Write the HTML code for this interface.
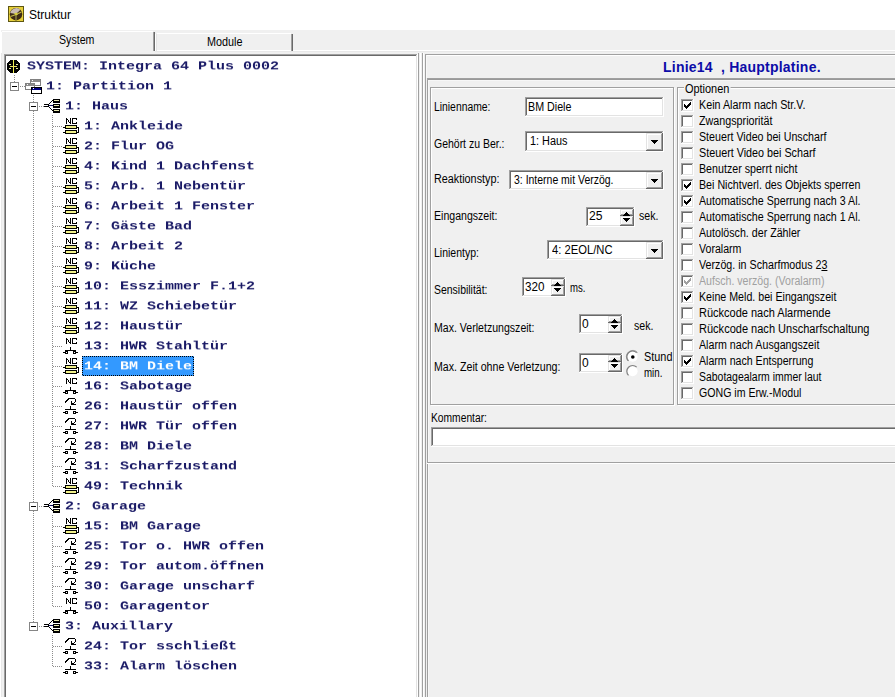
<!DOCTYPE html>
<html><head><meta charset="utf-8">
<style>
*{margin:0;padding:0}
html,body{width:895px;height:697px;overflow:hidden;background:#f0f0f0;position:relative;font-family:"Liberation Sans",sans-serif;font-size:12px;color:#000}
.full{position:absolute;left:0;top:0}
.abs{position:absolute}
.tr{position:absolute;font-family:"Liberation Mono",monospace;font-weight:bold;font-size:15px;transform:scaleY(0.8);transform-origin:0 0;will-change:transform;line-height:20px;height:20px;color:#1a1a66;white-space:pre}
.lb{position:absolute;white-space:pre;line-height:14px;font-size:12px;transform-origin:0 0}
u{text-decoration:underline}
</style></head><body>
<svg class="full" width="895" height="697" shape-rendering="crispEdges"><rect x="0" y="0" width="895" height="30" fill="#fff"/><rect x="0" y="30" width="1" height="667" fill="#fff"/><rect x="1" y="51" width="1" height="646" fill="#e8e8e8"/><rect x="1" y="50" width="894" height="1" fill="#fff"/><rect x="2" y="51" width="893" height="1" fill="#e8e8e8"/><rect x="1" y="31" width="154" height="22" fill="#f0f0f0"/><rect x="2" y="31" width="151" height="1" fill="#fff"/><rect x="1" y="32" width="1" height="21" fill="#fff"/><rect x="153" y="32" width="1" height="19" fill="#a0a0a0"/><rect x="154" y="32" width="1" height="19" fill="#696969"/><rect x="2" y="50" width="151" height="4" fill="#f0f0f0"/><rect x="157" y="33" width="134" height="1" fill="#fff"/><rect x="155" y="34" width="1" height="17" fill="#fff"/><rect x="156" y="34" width="1" height="17" fill="#e3e3e3"/><rect x="291" y="34" width="1" height="17" fill="#a0a0a0"/><rect x="292" y="34" width="1" height="17" fill="#696969"/><rect x="4" y="54" width="414" height="643" fill="#fff"/><rect x="4" y="54" width="413" height="1" fill="#a0a0a0"/><rect x="4" y="54" width="1" height="643" fill="#a0a0a0"/><rect x="5" y="55" width="411" height="1" fill="#696969"/><rect x="5" y="55" width="1" height="642" fill="#696969"/><rect x="416" y="55" width="1" height="642" fill="#e3e3e3"/><rect x="417" y="54" width="1" height="643" fill="#fff"/><rect x="418" y="53" width="1" height="644" fill="#a0a0a0"/><rect x="420" y="53" width="1" height="644" fill="#fff"/><rect x="422" y="53" width="1" height="644" fill="#a0a0a0"/><rect x="423" y="53" width="1" height="644" fill="#fff"/><rect x="425" y="54" width="1" height="643" fill="#a0a0a0"/><rect x="425" y="54" width="470" height="1" fill="#a0a0a0"/><rect x="426" y="55" width="469" height="1" fill="#fff"/><rect x="426" y="55" width="1" height="23" fill="#f8f8f8"/><rect x="427" y="78" width="468" height="1" fill="#a0a0a0"/><rect x="427" y="79" width="468" height="1" fill="#999999"/><rect x="427" y="78" width="1" height="619" fill="#a0a0a0"/><rect x="428" y="80" width="467" height="1" fill="#f7f7f7"/><rect x="428" y="80" width="1" height="617" fill="#f8f8f8"/><rect x="427" y="462" width="468" height="1" fill="#a0a0a0"/><rect x="427" y="463" width="468" height="1" fill="#fff"/><rect x="431" y="88" width="244" height="1" fill="#fff"/><rect x="431" y="88" width="1" height="318" fill="#fff"/><rect x="431" y="405" width="244" height="1" fill="#fff"/><rect x="674" y="88" width="1" height="318" fill="#fff"/><rect x="430" y="87" width="244" height="1" fill="#a0a0a0"/><rect x="430" y="87" width="1" height="318" fill="#a0a0a0"/><rect x="430" y="404" width="244" height="1" fill="#a0a0a0"/><rect x="673" y="87" width="1" height="318" fill="#a0a0a0"/><rect x="678" y="88" width="239" height="1" fill="#fff"/><rect x="678" y="88" width="1" height="318" fill="#fff"/><rect x="678" y="405" width="239" height="1" fill="#fff"/><rect x="916" y="88" width="1" height="318" fill="#fff"/><rect x="677" y="87" width="239" height="1" fill="#a0a0a0"/><rect x="677" y="87" width="1" height="318" fill="#a0a0a0"/><rect x="677" y="404" width="239" height="1" fill="#a0a0a0"/><rect x="915" y="87" width="1" height="318" fill="#a0a0a0"/><rect x="525" y="97" width="139" height="20" fill="#fff"/><rect x="525" y="97" width="138" height="1" fill="#a0a0a0"/><rect x="525" y="97" width="1" height="19" fill="#a0a0a0"/><rect x="526" y="98" width="136" height="1" fill="#696969"/><rect x="526" y="98" width="1" height="17" fill="#696969"/><rect x="525" y="116" width="139" height="1" fill="#fff"/><rect x="663" y="97" width="1" height="20" fill="#fff"/><rect x="526" y="115" width="137" height="1" fill="#e3e3e3"/><rect x="662" y="98" width="1" height="18" fill="#e3e3e3"/><rect x="525" y="131" width="139" height="21" fill="#fff"/><rect x="525" y="131" width="138" height="1" fill="#a0a0a0"/><rect x="525" y="131" width="1" height="20" fill="#a0a0a0"/><rect x="526" y="132" width="136" height="1" fill="#696969"/><rect x="526" y="132" width="1" height="18" fill="#696969"/><rect x="525" y="151" width="139" height="1" fill="#fff"/><rect x="663" y="131" width="1" height="21" fill="#fff"/><rect x="526" y="150" width="137" height="1" fill="#e3e3e3"/><rect x="662" y="132" width="1" height="19" fill="#e3e3e3"/><rect x="646" y="133" width="17" height="18" fill="#f0f0f0"/><rect x="646" y="133" width="16" height="1" fill="#e3e3e3"/><rect x="646" y="133" width="1" height="17" fill="#e3e3e3"/><rect x="647" y="134" width="14" height="1" fill="#fff"/><rect x="647" y="134" width="1" height="15" fill="#fff"/><rect x="646" y="150" width="17" height="1" fill="#696969"/><rect x="662" y="133" width="1" height="18" fill="#696969"/><rect x="647" y="149" width="15" height="1" fill="#a0a0a0"/><rect x="661" y="134" width="1" height="16" fill="#a0a0a0"/><rect x="651" y="140" width="7" height="1" fill="#000"/><rect x="652" y="141" width="5" height="1" fill="#000"/><rect x="653" y="142" width="3" height="1" fill="#000"/><rect x="654" y="143" width="1" height="1" fill="#000"/><rect x="509" y="170" width="155" height="20" fill="#fff"/><rect x="509" y="170" width="154" height="1" fill="#a0a0a0"/><rect x="509" y="170" width="1" height="19" fill="#a0a0a0"/><rect x="510" y="171" width="152" height="1" fill="#696969"/><rect x="510" y="171" width="1" height="17" fill="#696969"/><rect x="509" y="189" width="155" height="1" fill="#fff"/><rect x="663" y="170" width="1" height="20" fill="#fff"/><rect x="510" y="188" width="153" height="1" fill="#e3e3e3"/><rect x="662" y="171" width="1" height="18" fill="#e3e3e3"/><rect x="646" y="172" width="17" height="17" fill="#f0f0f0"/><rect x="646" y="172" width="16" height="1" fill="#e3e3e3"/><rect x="646" y="172" width="1" height="16" fill="#e3e3e3"/><rect x="647" y="173" width="14" height="1" fill="#fff"/><rect x="647" y="173" width="1" height="14" fill="#fff"/><rect x="646" y="188" width="17" height="1" fill="#696969"/><rect x="662" y="172" width="1" height="17" fill="#696969"/><rect x="647" y="187" width="15" height="1" fill="#a0a0a0"/><rect x="661" y="173" width="1" height="15" fill="#a0a0a0"/><rect x="651" y="179" width="7" height="1" fill="#000"/><rect x="652" y="180" width="5" height="1" fill="#000"/><rect x="653" y="181" width="3" height="1" fill="#000"/><rect x="654" y="182" width="1" height="1" fill="#000"/><rect x="586" y="207" width="49" height="20" fill="#fff"/><rect x="586" y="207" width="48" height="1" fill="#a0a0a0"/><rect x="586" y="207" width="1" height="19" fill="#a0a0a0"/><rect x="587" y="208" width="46" height="1" fill="#696969"/><rect x="587" y="208" width="1" height="17" fill="#696969"/><rect x="586" y="226" width="49" height="1" fill="#fff"/><rect x="634" y="207" width="1" height="20" fill="#fff"/><rect x="587" y="225" width="47" height="1" fill="#e3e3e3"/><rect x="633" y="208" width="1" height="18" fill="#e3e3e3"/><rect x="620" y="209" width="14" height="7" fill="#f0f0f0"/><rect x="620" y="209" width="13" height="1" fill="#e3e3e3"/><rect x="620" y="209" width="1" height="6" fill="#e3e3e3"/><rect x="621" y="210" width="11" height="1" fill="#fff"/><rect x="621" y="210" width="1" height="4" fill="#fff"/><rect x="620" y="215" width="14" height="1" fill="#696969"/><rect x="633" y="209" width="1" height="7" fill="#696969"/><rect x="621" y="214" width="12" height="1" fill="#a0a0a0"/><rect x="632" y="210" width="1" height="5" fill="#a0a0a0"/><rect x="620" y="216" width="14" height="10" fill="#f0f0f0"/><rect x="620" y="216" width="13" height="1" fill="#e3e3e3"/><rect x="620" y="216" width="1" height="9" fill="#e3e3e3"/><rect x="621" y="217" width="11" height="1" fill="#fff"/><rect x="621" y="217" width="1" height="7" fill="#fff"/><rect x="620" y="225" width="14" height="1" fill="#696969"/><rect x="633" y="216" width="1" height="10" fill="#696969"/><rect x="621" y="224" width="12" height="1" fill="#a0a0a0"/><rect x="632" y="217" width="1" height="8" fill="#a0a0a0"/><rect x="626" y="212" width="1" height="1" fill="#000"/><rect x="625" y="213" width="3" height="1" fill="#000"/><rect x="624" y="214" width="5" height="1" fill="#000"/><rect x="623" y="215" width="7" height="1" fill="#000"/><rect x="623" y="218" width="7" height="1" fill="#000"/><rect x="624" y="219" width="5" height="1" fill="#000"/><rect x="625" y="220" width="3" height="1" fill="#000"/><rect x="626" y="221" width="1" height="1" fill="#000"/><rect x="547" y="240" width="117" height="20" fill="#fff"/><rect x="547" y="240" width="116" height="1" fill="#a0a0a0"/><rect x="547" y="240" width="1" height="19" fill="#a0a0a0"/><rect x="548" y="241" width="114" height="1" fill="#696969"/><rect x="548" y="241" width="1" height="17" fill="#696969"/><rect x="547" y="259" width="117" height="1" fill="#fff"/><rect x="663" y="240" width="1" height="20" fill="#fff"/><rect x="548" y="258" width="115" height="1" fill="#e3e3e3"/><rect x="662" y="241" width="1" height="18" fill="#e3e3e3"/><rect x="646" y="242" width="17" height="17" fill="#f0f0f0"/><rect x="646" y="242" width="16" height="1" fill="#e3e3e3"/><rect x="646" y="242" width="1" height="16" fill="#e3e3e3"/><rect x="647" y="243" width="14" height="1" fill="#fff"/><rect x="647" y="243" width="1" height="14" fill="#fff"/><rect x="646" y="258" width="17" height="1" fill="#696969"/><rect x="662" y="242" width="1" height="17" fill="#696969"/><rect x="647" y="257" width="15" height="1" fill="#a0a0a0"/><rect x="661" y="243" width="1" height="15" fill="#a0a0a0"/><rect x="651" y="249" width="7" height="1" fill="#000"/><rect x="652" y="250" width="5" height="1" fill="#000"/><rect x="653" y="251" width="3" height="1" fill="#000"/><rect x="654" y="252" width="1" height="1" fill="#000"/><rect x="522" y="277" width="44" height="20" fill="#fff"/><rect x="522" y="277" width="43" height="1" fill="#a0a0a0"/><rect x="522" y="277" width="1" height="19" fill="#a0a0a0"/><rect x="523" y="278" width="41" height="1" fill="#696969"/><rect x="523" y="278" width="1" height="17" fill="#696969"/><rect x="522" y="296" width="44" height="1" fill="#fff"/><rect x="565" y="277" width="1" height="20" fill="#fff"/><rect x="523" y="295" width="42" height="1" fill="#e3e3e3"/><rect x="564" y="278" width="1" height="18" fill="#e3e3e3"/><rect x="551" y="279" width="14" height="7" fill="#f0f0f0"/><rect x="551" y="279" width="13" height="1" fill="#e3e3e3"/><rect x="551" y="279" width="1" height="6" fill="#e3e3e3"/><rect x="552" y="280" width="11" height="1" fill="#fff"/><rect x="552" y="280" width="1" height="4" fill="#fff"/><rect x="551" y="285" width="14" height="1" fill="#696969"/><rect x="564" y="279" width="1" height="7" fill="#696969"/><rect x="552" y="284" width="12" height="1" fill="#a0a0a0"/><rect x="563" y="280" width="1" height="5" fill="#a0a0a0"/><rect x="551" y="286" width="14" height="10" fill="#f0f0f0"/><rect x="551" y="286" width="13" height="1" fill="#e3e3e3"/><rect x="551" y="286" width="1" height="9" fill="#e3e3e3"/><rect x="552" y="287" width="11" height="1" fill="#fff"/><rect x="552" y="287" width="1" height="7" fill="#fff"/><rect x="551" y="295" width="14" height="1" fill="#696969"/><rect x="564" y="286" width="1" height="10" fill="#696969"/><rect x="552" y="294" width="12" height="1" fill="#a0a0a0"/><rect x="563" y="287" width="1" height="8" fill="#a0a0a0"/><rect x="557" y="282" width="1" height="1" fill="#000"/><rect x="556" y="283" width="3" height="1" fill="#000"/><rect x="555" y="284" width="5" height="1" fill="#000"/><rect x="554" y="285" width="7" height="1" fill="#000"/><rect x="554" y="288" width="7" height="1" fill="#000"/><rect x="555" y="289" width="5" height="1" fill="#000"/><rect x="556" y="290" width="3" height="1" fill="#000"/><rect x="557" y="291" width="1" height="1" fill="#000"/><rect x="579" y="314" width="44" height="20" fill="#fff"/><rect x="579" y="314" width="43" height="1" fill="#a0a0a0"/><rect x="579" y="314" width="1" height="19" fill="#a0a0a0"/><rect x="580" y="315" width="41" height="1" fill="#696969"/><rect x="580" y="315" width="1" height="17" fill="#696969"/><rect x="579" y="333" width="44" height="1" fill="#fff"/><rect x="622" y="314" width="1" height="20" fill="#fff"/><rect x="580" y="332" width="42" height="1" fill="#e3e3e3"/><rect x="621" y="315" width="1" height="18" fill="#e3e3e3"/><rect x="608" y="316" width="14" height="7" fill="#f0f0f0"/><rect x="608" y="316" width="13" height="1" fill="#e3e3e3"/><rect x="608" y="316" width="1" height="6" fill="#e3e3e3"/><rect x="609" y="317" width="11" height="1" fill="#fff"/><rect x="609" y="317" width="1" height="4" fill="#fff"/><rect x="608" y="322" width="14" height="1" fill="#696969"/><rect x="621" y="316" width="1" height="7" fill="#696969"/><rect x="609" y="321" width="12" height="1" fill="#a0a0a0"/><rect x="620" y="317" width="1" height="5" fill="#a0a0a0"/><rect x="608" y="323" width="14" height="10" fill="#f0f0f0"/><rect x="608" y="323" width="13" height="1" fill="#e3e3e3"/><rect x="608" y="323" width="1" height="9" fill="#e3e3e3"/><rect x="609" y="324" width="11" height="1" fill="#fff"/><rect x="609" y="324" width="1" height="7" fill="#fff"/><rect x="608" y="332" width="14" height="1" fill="#696969"/><rect x="621" y="323" width="1" height="10" fill="#696969"/><rect x="609" y="331" width="12" height="1" fill="#a0a0a0"/><rect x="620" y="324" width="1" height="8" fill="#a0a0a0"/><rect x="614" y="319" width="1" height="1" fill="#000"/><rect x="613" y="320" width="3" height="1" fill="#000"/><rect x="612" y="321" width="5" height="1" fill="#000"/><rect x="611" y="322" width="7" height="1" fill="#000"/><rect x="611" y="325" width="7" height="1" fill="#000"/><rect x="612" y="326" width="5" height="1" fill="#000"/><rect x="613" y="327" width="3" height="1" fill="#000"/><rect x="614" y="328" width="1" height="1" fill="#000"/><rect x="579" y="353" width="44" height="20" fill="#fff"/><rect x="579" y="353" width="43" height="1" fill="#a0a0a0"/><rect x="579" y="353" width="1" height="19" fill="#a0a0a0"/><rect x="580" y="354" width="41" height="1" fill="#696969"/><rect x="580" y="354" width="1" height="17" fill="#696969"/><rect x="579" y="372" width="44" height="1" fill="#fff"/><rect x="622" y="353" width="1" height="20" fill="#fff"/><rect x="580" y="371" width="42" height="1" fill="#e3e3e3"/><rect x="621" y="354" width="1" height="18" fill="#e3e3e3"/><rect x="608" y="355" width="14" height="7" fill="#f0f0f0"/><rect x="608" y="355" width="13" height="1" fill="#e3e3e3"/><rect x="608" y="355" width="1" height="6" fill="#e3e3e3"/><rect x="609" y="356" width="11" height="1" fill="#fff"/><rect x="609" y="356" width="1" height="4" fill="#fff"/><rect x="608" y="361" width="14" height="1" fill="#696969"/><rect x="621" y="355" width="1" height="7" fill="#696969"/><rect x="609" y="360" width="12" height="1" fill="#a0a0a0"/><rect x="620" y="356" width="1" height="5" fill="#a0a0a0"/><rect x="608" y="362" width="14" height="10" fill="#f0f0f0"/><rect x="608" y="362" width="13" height="1" fill="#e3e3e3"/><rect x="608" y="362" width="1" height="9" fill="#e3e3e3"/><rect x="609" y="363" width="11" height="1" fill="#fff"/><rect x="609" y="363" width="1" height="7" fill="#fff"/><rect x="608" y="371" width="14" height="1" fill="#696969"/><rect x="621" y="362" width="1" height="10" fill="#696969"/><rect x="609" y="370" width="12" height="1" fill="#a0a0a0"/><rect x="620" y="363" width="1" height="8" fill="#a0a0a0"/><rect x="614" y="358" width="1" height="1" fill="#000"/><rect x="613" y="359" width="3" height="1" fill="#000"/><rect x="612" y="360" width="5" height="1" fill="#000"/><rect x="611" y="361" width="7" height="1" fill="#000"/><rect x="611" y="364" width="7" height="1" fill="#000"/><rect x="612" y="365" width="5" height="1" fill="#000"/><rect x="613" y="366" width="3" height="1" fill="#000"/><rect x="614" y="367" width="1" height="1" fill="#000"/><rect x="431" y="427" width="480" height="20" fill="#fff"/><rect x="431" y="427" width="479" height="1" fill="#a0a0a0"/><rect x="431" y="427" width="1" height="19" fill="#a0a0a0"/><rect x="432" y="428" width="477" height="1" fill="#696969"/><rect x="432" y="428" width="1" height="17" fill="#696969"/><rect x="431" y="446" width="480" height="1" fill="#fff"/><rect x="910" y="427" width="1" height="20" fill="#fff"/><rect x="432" y="445" width="478" height="1" fill="#e3e3e3"/><rect x="909" y="428" width="1" height="18" fill="#e3e3e3"/><g shape-rendering="geometricPrecision"><path d="M637.5 352.5 A5.5 5.5 0 0 0 628 361" stroke="#a0a0a0" stroke-width="1" fill="none"/><path d="M638 352 A5.5 5.5 0 1 0 638 352.01" fill="none"/><circle cx="632.6" cy="356.8" r="5" fill="#fff"/><path d="M636.7 352.7 A5.6 5.6 0 0 0 628.5 360.9" stroke="#808080" stroke-width="1.2" fill="none"/><circle cx="632.8" cy="357" r="1.8" fill="#000"/><circle cx="632.6" cy="371.3" r="5" fill="#fff"/><path d="M636.7 367.2 A5.6 5.6 0 0 0 628.5 375.4" stroke="#808080" stroke-width="1.2" fill="none"/></g><path d="M10 60h7v1h1v1h1v1h1v7h-1v1h-1v1h-1v1h-7v-1h-1v-1h-1v-1h-1v-7h1v-1h1v-1h1z" fill="#000"/><rect x="13" y="60" width="1" height="13" fill="#f0f050"/><rect x="10" y="66" width="7" height="1" fill="#e8e060"/><rect x="9" y="64" width="2" height="1" fill="#e8e8a0"/><rect x="16" y="64" width="2" height="1" fill="#e8e8a0"/><rect x="9" y="68" width="2" height="1" fill="#e8e8a0"/><rect x="16" y="68" width="2" height="1" fill="#e8e8a0"/><rect x="10" y="82" width="9" height="9" fill="#858585"/><rect x="11" y="83" width="7" height="7" fill="#fff"/><rect x="12" y="86" width="5" height="1" fill="#000"/><rect x="20" y="86" width="1" height="1" fill="#8c8c8c"/><rect x="22" y="86" width="1" height="1" fill="#8c8c8c"/><rect x="24" y="86" width="1" height="1" fill="#8c8c8c"/><rect x="30" y="79" width="11" height="7" fill="#808080"/><rect x="31" y="80" width="9" height="2" fill="#8c8c8c"/><rect x="31" y="82" width="9" height="3" fill="#fff"/><rect x="32" y="80" width="1" height="1" fill="#fff"/><rect x="25" y="83" width="10" height="7" fill="#808080"/><rect x="26" y="84" width="8" height="2" fill="#8c8c8c"/><rect x="26" y="86" width="8" height="3" fill="#fff"/><rect x="27" y="84" width="1" height="1" fill="#fff"/><rect x="31" y="87" width="11" height="7" fill="#000"/><rect x="32" y="88" width="9" height="2" fill="#000080"/><rect x="32" y="90" width="9" height="3" fill="#fff"/><rect x="33" y="88" width="1" height="1" fill="#fff"/><rect x="29" y="102" width="9" height="9" fill="#858585"/><rect x="30" y="103" width="7" height="7" fill="#fff"/><rect x="31" y="106" width="5" height="1" fill="#000"/><rect x="39" y="106" width="1" height="1" fill="#8c8c8c"/><rect x="41" y="106" width="1" height="1" fill="#8c8c8c"/><rect x="43" y="106" width="1" height="1" fill="#8c8c8c"/><rect x="44" y="104" width="5" height="1" fill="#000"/><rect x="44" y="106" width="5" height="1" fill="#000"/><rect x="48" y="104" width="1" height="3" fill="#000"/><rect x="49" y="103" width="1" height="1" fill="#000"/><rect x="49" y="107" width="1" height="1" fill="#000"/><rect x="50" y="102" width="1" height="1" fill="#000"/><rect x="50" y="108" width="1" height="1" fill="#000"/><rect x="51" y="101" width="1" height="1" fill="#000"/><rect x="51" y="109" width="1" height="1" fill="#000"/><rect x="52" y="100" width="1" height="1" fill="#000"/><rect x="52" y="110" width="1" height="1" fill="#000"/><rect x="49" y="105" width="4" height="1" fill="#101060"/><rect x="53" y="99" width="7" height="4" fill="#000"/><rect x="54" y="100" width="5" height="1" fill="#e8e8b0"/><rect x="53" y="104" width="7" height="4" fill="#000"/><rect x="54" y="105" width="5" height="1" fill="#e8e8b0"/><rect x="53" y="109" width="7" height="4" fill="#000"/><rect x="54" y="110" width="5" height="1" fill="#e8e8b0"/><rect x="53" y="126" width="1" height="1" fill="#8c8c8c"/><rect x="55" y="126" width="1" height="1" fill="#8c8c8c"/><rect x="57" y="126" width="1" height="1" fill="#8c8c8c"/><rect x="59" y="126" width="1" height="1" fill="#8c8c8c"/><rect x="61" y="126" width="1" height="1" fill="#8c8c8c"/><rect x="66" y="118" width="1" height="6" fill="#000"/><rect x="70" y="118" width="1" height="6" fill="#000"/><rect x="67" y="119" width="1" height="1" fill="#000"/><rect x="68" y="120" width="1" height="2" fill="#000"/><rect x="69" y="122" width="1" height="1" fill="#000"/><rect x="72" y="118" width="1" height="6" fill="#000"/><rect x="72" y="118" width="5" height="1" fill="#000"/><rect x="72" y="123" width="5" height="1" fill="#000"/><rect x="76" y="119" width="1" height="1" fill="#000"/><rect x="76" y="122" width="1" height="1" fill="#000"/><rect x="65" y="125" width="12" height="4" fill="#000"/><rect x="66" y="126" width="10" height="2" fill="#f0f088"/><rect x="63" y="127" width="2" height="1" fill="#000"/><rect x="65" y="130" width="12" height="4" fill="#000"/><rect x="66" y="131" width="10" height="2" fill="#f0f088"/><rect x="63" y="132" width="2" height="1" fill="#000"/><rect x="78" y="127" width="1" height="6" fill="#000"/><rect x="77" y="127" width="1" height="1" fill="#000"/><rect x="77" y="132" width="1" height="1" fill="#000"/><rect x="53" y="146" width="1" height="1" fill="#8c8c8c"/><rect x="55" y="146" width="1" height="1" fill="#8c8c8c"/><rect x="57" y="146" width="1" height="1" fill="#8c8c8c"/><rect x="59" y="146" width="1" height="1" fill="#8c8c8c"/><rect x="61" y="146" width="1" height="1" fill="#8c8c8c"/><rect x="66" y="138" width="1" height="6" fill="#000"/><rect x="70" y="138" width="1" height="6" fill="#000"/><rect x="67" y="139" width="1" height="1" fill="#000"/><rect x="68" y="140" width="1" height="2" fill="#000"/><rect x="69" y="142" width="1" height="1" fill="#000"/><rect x="72" y="138" width="1" height="6" fill="#000"/><rect x="72" y="138" width="5" height="1" fill="#000"/><rect x="72" y="143" width="5" height="1" fill="#000"/><rect x="76" y="139" width="1" height="1" fill="#000"/><rect x="76" y="142" width="1" height="1" fill="#000"/><rect x="65" y="145" width="12" height="4" fill="#000"/><rect x="66" y="146" width="10" height="2" fill="#f0f088"/><rect x="63" y="147" width="2" height="1" fill="#000"/><rect x="65" y="150" width="12" height="4" fill="#000"/><rect x="66" y="151" width="10" height="2" fill="#f0f088"/><rect x="63" y="152" width="2" height="1" fill="#000"/><rect x="78" y="147" width="1" height="6" fill="#000"/><rect x="77" y="147" width="1" height="1" fill="#000"/><rect x="77" y="152" width="1" height="1" fill="#000"/><rect x="53" y="166" width="1" height="1" fill="#8c8c8c"/><rect x="55" y="166" width="1" height="1" fill="#8c8c8c"/><rect x="57" y="166" width="1" height="1" fill="#8c8c8c"/><rect x="59" y="166" width="1" height="1" fill="#8c8c8c"/><rect x="61" y="166" width="1" height="1" fill="#8c8c8c"/><rect x="66" y="158" width="1" height="6" fill="#000"/><rect x="70" y="158" width="1" height="6" fill="#000"/><rect x="67" y="159" width="1" height="1" fill="#000"/><rect x="68" y="160" width="1" height="2" fill="#000"/><rect x="69" y="162" width="1" height="1" fill="#000"/><rect x="72" y="158" width="1" height="6" fill="#000"/><rect x="72" y="158" width="5" height="1" fill="#000"/><rect x="72" y="163" width="5" height="1" fill="#000"/><rect x="76" y="159" width="1" height="1" fill="#000"/><rect x="76" y="162" width="1" height="1" fill="#000"/><rect x="65" y="165" width="12" height="4" fill="#000"/><rect x="66" y="166" width="10" height="2" fill="#f0f088"/><rect x="63" y="167" width="2" height="1" fill="#000"/><rect x="65" y="170" width="12" height="4" fill="#000"/><rect x="66" y="171" width="10" height="2" fill="#f0f088"/><rect x="63" y="172" width="2" height="1" fill="#000"/><rect x="78" y="167" width="1" height="6" fill="#000"/><rect x="77" y="167" width="1" height="1" fill="#000"/><rect x="77" y="172" width="1" height="1" fill="#000"/><rect x="53" y="186" width="1" height="1" fill="#8c8c8c"/><rect x="55" y="186" width="1" height="1" fill="#8c8c8c"/><rect x="57" y="186" width="1" height="1" fill="#8c8c8c"/><rect x="59" y="186" width="1" height="1" fill="#8c8c8c"/><rect x="61" y="186" width="1" height="1" fill="#8c8c8c"/><rect x="66" y="178" width="1" height="6" fill="#000"/><rect x="70" y="178" width="1" height="6" fill="#000"/><rect x="67" y="179" width="1" height="1" fill="#000"/><rect x="68" y="180" width="1" height="2" fill="#000"/><rect x="69" y="182" width="1" height="1" fill="#000"/><rect x="72" y="178" width="1" height="6" fill="#000"/><rect x="72" y="178" width="5" height="1" fill="#000"/><rect x="72" y="183" width="5" height="1" fill="#000"/><rect x="76" y="179" width="1" height="1" fill="#000"/><rect x="76" y="182" width="1" height="1" fill="#000"/><rect x="65" y="185" width="12" height="4" fill="#000"/><rect x="66" y="186" width="10" height="2" fill="#f0f088"/><rect x="63" y="187" width="2" height="1" fill="#000"/><rect x="65" y="190" width="12" height="4" fill="#000"/><rect x="66" y="191" width="10" height="2" fill="#f0f088"/><rect x="63" y="192" width="2" height="1" fill="#000"/><rect x="78" y="187" width="1" height="6" fill="#000"/><rect x="77" y="187" width="1" height="1" fill="#000"/><rect x="77" y="192" width="1" height="1" fill="#000"/><rect x="53" y="206" width="1" height="1" fill="#8c8c8c"/><rect x="55" y="206" width="1" height="1" fill="#8c8c8c"/><rect x="57" y="206" width="1" height="1" fill="#8c8c8c"/><rect x="59" y="206" width="1" height="1" fill="#8c8c8c"/><rect x="61" y="206" width="1" height="1" fill="#8c8c8c"/><rect x="66" y="198" width="1" height="6" fill="#000"/><rect x="70" y="198" width="1" height="6" fill="#000"/><rect x="67" y="199" width="1" height="1" fill="#000"/><rect x="68" y="200" width="1" height="2" fill="#000"/><rect x="69" y="202" width="1" height="1" fill="#000"/><rect x="72" y="198" width="1" height="6" fill="#000"/><rect x="72" y="198" width="5" height="1" fill="#000"/><rect x="72" y="203" width="5" height="1" fill="#000"/><rect x="76" y="199" width="1" height="1" fill="#000"/><rect x="76" y="202" width="1" height="1" fill="#000"/><rect x="65" y="205" width="12" height="4" fill="#000"/><rect x="66" y="206" width="10" height="2" fill="#f0f088"/><rect x="63" y="207" width="2" height="1" fill="#000"/><rect x="65" y="210" width="12" height="4" fill="#000"/><rect x="66" y="211" width="10" height="2" fill="#f0f088"/><rect x="63" y="212" width="2" height="1" fill="#000"/><rect x="78" y="207" width="1" height="6" fill="#000"/><rect x="77" y="207" width="1" height="1" fill="#000"/><rect x="77" y="212" width="1" height="1" fill="#000"/><rect x="53" y="226" width="1" height="1" fill="#8c8c8c"/><rect x="55" y="226" width="1" height="1" fill="#8c8c8c"/><rect x="57" y="226" width="1" height="1" fill="#8c8c8c"/><rect x="59" y="226" width="1" height="1" fill="#8c8c8c"/><rect x="61" y="226" width="1" height="1" fill="#8c8c8c"/><rect x="66" y="218" width="1" height="6" fill="#000"/><rect x="70" y="218" width="1" height="6" fill="#000"/><rect x="67" y="219" width="1" height="1" fill="#000"/><rect x="68" y="220" width="1" height="2" fill="#000"/><rect x="69" y="222" width="1" height="1" fill="#000"/><rect x="72" y="218" width="1" height="6" fill="#000"/><rect x="72" y="218" width="5" height="1" fill="#000"/><rect x="72" y="223" width="5" height="1" fill="#000"/><rect x="76" y="219" width="1" height="1" fill="#000"/><rect x="76" y="222" width="1" height="1" fill="#000"/><rect x="65" y="225" width="12" height="4" fill="#000"/><rect x="66" y="226" width="10" height="2" fill="#f0f088"/><rect x="63" y="227" width="2" height="1" fill="#000"/><rect x="65" y="230" width="12" height="4" fill="#000"/><rect x="66" y="231" width="10" height="2" fill="#f0f088"/><rect x="63" y="232" width="2" height="1" fill="#000"/><rect x="78" y="227" width="1" height="6" fill="#000"/><rect x="77" y="227" width="1" height="1" fill="#000"/><rect x="77" y="232" width="1" height="1" fill="#000"/><rect x="53" y="246" width="1" height="1" fill="#8c8c8c"/><rect x="55" y="246" width="1" height="1" fill="#8c8c8c"/><rect x="57" y="246" width="1" height="1" fill="#8c8c8c"/><rect x="59" y="246" width="1" height="1" fill="#8c8c8c"/><rect x="61" y="246" width="1" height="1" fill="#8c8c8c"/><rect x="66" y="238" width="1" height="6" fill="#000"/><rect x="70" y="238" width="1" height="6" fill="#000"/><rect x="67" y="239" width="1" height="1" fill="#000"/><rect x="68" y="240" width="1" height="2" fill="#000"/><rect x="69" y="242" width="1" height="1" fill="#000"/><rect x="72" y="238" width="1" height="6" fill="#000"/><rect x="72" y="238" width="5" height="1" fill="#000"/><rect x="72" y="243" width="5" height="1" fill="#000"/><rect x="76" y="239" width="1" height="1" fill="#000"/><rect x="76" y="242" width="1" height="1" fill="#000"/><rect x="65" y="245" width="12" height="4" fill="#000"/><rect x="66" y="246" width="10" height="2" fill="#f0f088"/><rect x="63" y="247" width="2" height="1" fill="#000"/><rect x="65" y="250" width="12" height="4" fill="#000"/><rect x="66" y="251" width="10" height="2" fill="#f0f088"/><rect x="63" y="252" width="2" height="1" fill="#000"/><rect x="78" y="247" width="1" height="6" fill="#000"/><rect x="77" y="247" width="1" height="1" fill="#000"/><rect x="77" y="252" width="1" height="1" fill="#000"/><rect x="53" y="266" width="1" height="1" fill="#8c8c8c"/><rect x="55" y="266" width="1" height="1" fill="#8c8c8c"/><rect x="57" y="266" width="1" height="1" fill="#8c8c8c"/><rect x="59" y="266" width="1" height="1" fill="#8c8c8c"/><rect x="61" y="266" width="1" height="1" fill="#8c8c8c"/><rect x="66" y="258" width="1" height="6" fill="#000"/><rect x="70" y="258" width="1" height="6" fill="#000"/><rect x="67" y="259" width="1" height="1" fill="#000"/><rect x="68" y="260" width="1" height="2" fill="#000"/><rect x="69" y="262" width="1" height="1" fill="#000"/><rect x="72" y="258" width="1" height="6" fill="#000"/><rect x="72" y="258" width="5" height="1" fill="#000"/><rect x="72" y="263" width="5" height="1" fill="#000"/><rect x="76" y="259" width="1" height="1" fill="#000"/><rect x="76" y="262" width="1" height="1" fill="#000"/><rect x="65" y="265" width="12" height="4" fill="#000"/><rect x="66" y="266" width="10" height="2" fill="#f0f088"/><rect x="63" y="267" width="2" height="1" fill="#000"/><rect x="65" y="270" width="12" height="4" fill="#000"/><rect x="66" y="271" width="10" height="2" fill="#f0f088"/><rect x="63" y="272" width="2" height="1" fill="#000"/><rect x="78" y="267" width="1" height="6" fill="#000"/><rect x="77" y="267" width="1" height="1" fill="#000"/><rect x="77" y="272" width="1" height="1" fill="#000"/><rect x="53" y="286" width="1" height="1" fill="#8c8c8c"/><rect x="55" y="286" width="1" height="1" fill="#8c8c8c"/><rect x="57" y="286" width="1" height="1" fill="#8c8c8c"/><rect x="59" y="286" width="1" height="1" fill="#8c8c8c"/><rect x="61" y="286" width="1" height="1" fill="#8c8c8c"/><rect x="66" y="278" width="1" height="6" fill="#000"/><rect x="70" y="278" width="1" height="6" fill="#000"/><rect x="67" y="279" width="1" height="1" fill="#000"/><rect x="68" y="280" width="1" height="2" fill="#000"/><rect x="69" y="282" width="1" height="1" fill="#000"/><rect x="72" y="278" width="1" height="6" fill="#000"/><rect x="72" y="278" width="5" height="1" fill="#000"/><rect x="72" y="283" width="5" height="1" fill="#000"/><rect x="76" y="279" width="1" height="1" fill="#000"/><rect x="76" y="282" width="1" height="1" fill="#000"/><rect x="65" y="285" width="12" height="4" fill="#000"/><rect x="66" y="286" width="10" height="2" fill="#f0f088"/><rect x="63" y="287" width="2" height="1" fill="#000"/><rect x="65" y="290" width="12" height="4" fill="#000"/><rect x="66" y="291" width="10" height="2" fill="#f0f088"/><rect x="63" y="292" width="2" height="1" fill="#000"/><rect x="78" y="287" width="1" height="6" fill="#000"/><rect x="77" y="287" width="1" height="1" fill="#000"/><rect x="77" y="292" width="1" height="1" fill="#000"/><rect x="53" y="306" width="1" height="1" fill="#8c8c8c"/><rect x="55" y="306" width="1" height="1" fill="#8c8c8c"/><rect x="57" y="306" width="1" height="1" fill="#8c8c8c"/><rect x="59" y="306" width="1" height="1" fill="#8c8c8c"/><rect x="61" y="306" width="1" height="1" fill="#8c8c8c"/><rect x="66" y="298" width="1" height="6" fill="#000"/><rect x="70" y="298" width="1" height="6" fill="#000"/><rect x="67" y="299" width="1" height="1" fill="#000"/><rect x="68" y="300" width="1" height="2" fill="#000"/><rect x="69" y="302" width="1" height="1" fill="#000"/><rect x="72" y="298" width="1" height="6" fill="#000"/><rect x="72" y="298" width="5" height="1" fill="#000"/><rect x="72" y="303" width="5" height="1" fill="#000"/><rect x="76" y="299" width="1" height="1" fill="#000"/><rect x="76" y="302" width="1" height="1" fill="#000"/><rect x="65" y="305" width="12" height="4" fill="#000"/><rect x="66" y="306" width="10" height="2" fill="#f0f088"/><rect x="63" y="307" width="2" height="1" fill="#000"/><rect x="65" y="310" width="12" height="4" fill="#000"/><rect x="66" y="311" width="10" height="2" fill="#f0f088"/><rect x="63" y="312" width="2" height="1" fill="#000"/><rect x="78" y="307" width="1" height="6" fill="#000"/><rect x="77" y="307" width="1" height="1" fill="#000"/><rect x="77" y="312" width="1" height="1" fill="#000"/><rect x="53" y="326" width="1" height="1" fill="#8c8c8c"/><rect x="55" y="326" width="1" height="1" fill="#8c8c8c"/><rect x="57" y="326" width="1" height="1" fill="#8c8c8c"/><rect x="59" y="326" width="1" height="1" fill="#8c8c8c"/><rect x="61" y="326" width="1" height="1" fill="#8c8c8c"/><rect x="66" y="318" width="1" height="6" fill="#000"/><rect x="70" y="318" width="1" height="6" fill="#000"/><rect x="67" y="319" width="1" height="1" fill="#000"/><rect x="68" y="320" width="1" height="2" fill="#000"/><rect x="69" y="322" width="1" height="1" fill="#000"/><rect x="72" y="318" width="1" height="6" fill="#000"/><rect x="72" y="318" width="5" height="1" fill="#000"/><rect x="72" y="323" width="5" height="1" fill="#000"/><rect x="76" y="319" width="1" height="1" fill="#000"/><rect x="76" y="322" width="1" height="1" fill="#000"/><rect x="65" y="325" width="12" height="4" fill="#000"/><rect x="66" y="326" width="10" height="2" fill="#f0f088"/><rect x="63" y="327" width="2" height="1" fill="#000"/><rect x="65" y="330" width="12" height="4" fill="#000"/><rect x="66" y="331" width="10" height="2" fill="#f0f088"/><rect x="63" y="332" width="2" height="1" fill="#000"/><rect x="78" y="327" width="1" height="6" fill="#000"/><rect x="77" y="327" width="1" height="1" fill="#000"/><rect x="77" y="332" width="1" height="1" fill="#000"/><rect x="53" y="346" width="1" height="1" fill="#8c8c8c"/><rect x="55" y="346" width="1" height="1" fill="#8c8c8c"/><rect x="57" y="346" width="1" height="1" fill="#8c8c8c"/><rect x="59" y="346" width="1" height="1" fill="#8c8c8c"/><rect x="61" y="346" width="1" height="1" fill="#8c8c8c"/><rect x="66" y="338" width="1" height="6" fill="#000"/><rect x="70" y="338" width="1" height="6" fill="#000"/><rect x="67" y="339" width="1" height="1" fill="#000"/><rect x="68" y="340" width="1" height="2" fill="#000"/><rect x="69" y="342" width="1" height="1" fill="#000"/><rect x="72" y="338" width="1" height="6" fill="#000"/><rect x="72" y="338" width="5" height="1" fill="#000"/><rect x="72" y="343" width="5" height="1" fill="#000"/><rect x="76" y="339" width="1" height="1" fill="#000"/><rect x="76" y="342" width="1" height="1" fill="#000"/><rect x="70" y="347" width="1" height="3" fill="#000"/><rect x="65" y="350" width="11" height="1" fill="#000"/><rect x="65" y="351" width="3" height="3" fill="#000"/><rect x="66" y="352" width="1" height="1" fill="#fff"/><rect x="73" y="351" width="3" height="3" fill="#000"/><rect x="74" y="352" width="1" height="1" fill="#fff"/><rect x="63" y="352" width="2" height="1" fill="#000"/><rect x="76" y="352" width="2" height="1" fill="#000"/><rect x="53" y="366" width="1" height="1" fill="#8c8c8c"/><rect x="55" y="366" width="1" height="1" fill="#8c8c8c"/><rect x="57" y="366" width="1" height="1" fill="#8c8c8c"/><rect x="59" y="366" width="1" height="1" fill="#8c8c8c"/><rect x="61" y="366" width="1" height="1" fill="#8c8c8c"/><rect x="66" y="358" width="1" height="6" fill="#000"/><rect x="70" y="358" width="1" height="6" fill="#000"/><rect x="67" y="359" width="1" height="1" fill="#000"/><rect x="68" y="360" width="1" height="2" fill="#000"/><rect x="69" y="362" width="1" height="1" fill="#000"/><rect x="72" y="358" width="1" height="6" fill="#000"/><rect x="72" y="358" width="5" height="1" fill="#000"/><rect x="72" y="363" width="5" height="1" fill="#000"/><rect x="76" y="359" width="1" height="1" fill="#000"/><rect x="76" y="362" width="1" height="1" fill="#000"/><rect x="65" y="365" width="12" height="4" fill="#000"/><rect x="66" y="366" width="10" height="2" fill="#f0f088"/><rect x="63" y="367" width="2" height="1" fill="#000"/><rect x="65" y="370" width="12" height="4" fill="#000"/><rect x="66" y="371" width="10" height="2" fill="#f0f088"/><rect x="63" y="372" width="2" height="1" fill="#000"/><rect x="78" y="367" width="1" height="6" fill="#000"/><rect x="77" y="367" width="1" height="1" fill="#000"/><rect x="77" y="372" width="1" height="1" fill="#000"/><rect x="82" y="356" width="112" height="20" fill="#3399ff"/><rect x="82" y="356" width="1" height="1" fill="#000"/><rect x="83" y="375" width="1" height="1" fill="#000"/><rect x="84" y="356" width="1" height="1" fill="#000"/><rect x="85" y="375" width="1" height="1" fill="#000"/><rect x="86" y="356" width="1" height="1" fill="#000"/><rect x="87" y="375" width="1" height="1" fill="#000"/><rect x="88" y="356" width="1" height="1" fill="#000"/><rect x="89" y="375" width="1" height="1" fill="#000"/><rect x="90" y="356" width="1" height="1" fill="#000"/><rect x="91" y="375" width="1" height="1" fill="#000"/><rect x="92" y="356" width="1" height="1" fill="#000"/><rect x="93" y="375" width="1" height="1" fill="#000"/><rect x="94" y="356" width="1" height="1" fill="#000"/><rect x="95" y="375" width="1" height="1" fill="#000"/><rect x="96" y="356" width="1" height="1" fill="#000"/><rect x="97" y="375" width="1" height="1" fill="#000"/><rect x="98" y="356" width="1" height="1" fill="#000"/><rect x="99" y="375" width="1" height="1" fill="#000"/><rect x="100" y="356" width="1" height="1" fill="#000"/><rect x="101" y="375" width="1" height="1" fill="#000"/><rect x="102" y="356" width="1" height="1" fill="#000"/><rect x="103" y="375" width="1" height="1" fill="#000"/><rect x="104" y="356" width="1" height="1" fill="#000"/><rect x="105" y="375" width="1" height="1" fill="#000"/><rect x="106" y="356" width="1" height="1" fill="#000"/><rect x="107" y="375" width="1" height="1" fill="#000"/><rect x="108" y="356" width="1" height="1" fill="#000"/><rect x="109" y="375" width="1" height="1" fill="#000"/><rect x="110" y="356" width="1" height="1" fill="#000"/><rect x="111" y="375" width="1" height="1" fill="#000"/><rect x="112" y="356" width="1" height="1" fill="#000"/><rect x="113" y="375" width="1" height="1" fill="#000"/><rect x="114" y="356" width="1" height="1" fill="#000"/><rect x="115" y="375" width="1" height="1" fill="#000"/><rect x="116" y="356" width="1" height="1" fill="#000"/><rect x="117" y="375" width="1" height="1" fill="#000"/><rect x="118" y="356" width="1" height="1" fill="#000"/><rect x="119" y="375" width="1" height="1" fill="#000"/><rect x="120" y="356" width="1" height="1" fill="#000"/><rect x="121" y="375" width="1" height="1" fill="#000"/><rect x="122" y="356" width="1" height="1" fill="#000"/><rect x="123" y="375" width="1" height="1" fill="#000"/><rect x="124" y="356" width="1" height="1" fill="#000"/><rect x="125" y="375" width="1" height="1" fill="#000"/><rect x="126" y="356" width="1" height="1" fill="#000"/><rect x="127" y="375" width="1" height="1" fill="#000"/><rect x="128" y="356" width="1" height="1" fill="#000"/><rect x="129" y="375" width="1" height="1" fill="#000"/><rect x="130" y="356" width="1" height="1" fill="#000"/><rect x="131" y="375" width="1" height="1" fill="#000"/><rect x="132" y="356" width="1" height="1" fill="#000"/><rect x="133" y="375" width="1" height="1" fill="#000"/><rect x="134" y="356" width="1" height="1" fill="#000"/><rect x="135" y="375" width="1" height="1" fill="#000"/><rect x="136" y="356" width="1" height="1" fill="#000"/><rect x="137" y="375" width="1" height="1" fill="#000"/><rect x="138" y="356" width="1" height="1" fill="#000"/><rect x="139" y="375" width="1" height="1" fill="#000"/><rect x="140" y="356" width="1" height="1" fill="#000"/><rect x="141" y="375" width="1" height="1" fill="#000"/><rect x="142" y="356" width="1" height="1" fill="#000"/><rect x="143" y="375" width="1" height="1" fill="#000"/><rect x="144" y="356" width="1" height="1" fill="#000"/><rect x="145" y="375" width="1" height="1" fill="#000"/><rect x="146" y="356" width="1" height="1" fill="#000"/><rect x="147" y="375" width="1" height="1" fill="#000"/><rect x="148" y="356" width="1" height="1" fill="#000"/><rect x="149" y="375" width="1" height="1" fill="#000"/><rect x="150" y="356" width="1" height="1" fill="#000"/><rect x="151" y="375" width="1" height="1" fill="#000"/><rect x="152" y="356" width="1" height="1" fill="#000"/><rect x="153" y="375" width="1" height="1" fill="#000"/><rect x="154" y="356" width="1" height="1" fill="#000"/><rect x="155" y="375" width="1" height="1" fill="#000"/><rect x="156" y="356" width="1" height="1" fill="#000"/><rect x="157" y="375" width="1" height="1" fill="#000"/><rect x="158" y="356" width="1" height="1" fill="#000"/><rect x="159" y="375" width="1" height="1" fill="#000"/><rect x="160" y="356" width="1" height="1" fill="#000"/><rect x="161" y="375" width="1" height="1" fill="#000"/><rect x="162" y="356" width="1" height="1" fill="#000"/><rect x="163" y="375" width="1" height="1" fill="#000"/><rect x="164" y="356" width="1" height="1" fill="#000"/><rect x="165" y="375" width="1" height="1" fill="#000"/><rect x="166" y="356" width="1" height="1" fill="#000"/><rect x="167" y="375" width="1" height="1" fill="#000"/><rect x="168" y="356" width="1" height="1" fill="#000"/><rect x="169" y="375" width="1" height="1" fill="#000"/><rect x="170" y="356" width="1" height="1" fill="#000"/><rect x="171" y="375" width="1" height="1" fill="#000"/><rect x="172" y="356" width="1" height="1" fill="#000"/><rect x="173" y="375" width="1" height="1" fill="#000"/><rect x="174" y="356" width="1" height="1" fill="#000"/><rect x="175" y="375" width="1" height="1" fill="#000"/><rect x="176" y="356" width="1" height="1" fill="#000"/><rect x="177" y="375" width="1" height="1" fill="#000"/><rect x="178" y="356" width="1" height="1" fill="#000"/><rect x="179" y="375" width="1" height="1" fill="#000"/><rect x="180" y="356" width="1" height="1" fill="#000"/><rect x="181" y="375" width="1" height="1" fill="#000"/><rect x="182" y="356" width="1" height="1" fill="#000"/><rect x="183" y="375" width="1" height="1" fill="#000"/><rect x="184" y="356" width="1" height="1" fill="#000"/><rect x="185" y="375" width="1" height="1" fill="#000"/><rect x="186" y="356" width="1" height="1" fill="#000"/><rect x="187" y="375" width="1" height="1" fill="#000"/><rect x="188" y="356" width="1" height="1" fill="#000"/><rect x="189" y="375" width="1" height="1" fill="#000"/><rect x="190" y="356" width="1" height="1" fill="#000"/><rect x="191" y="375" width="1" height="1" fill="#000"/><rect x="192" y="356" width="1" height="1" fill="#000"/><rect x="193" y="375" width="1" height="1" fill="#000"/><rect x="82" y="356" width="1" height="1" fill="#000"/><rect x="193" y="357" width="1" height="1" fill="#000"/><rect x="82" y="358" width="1" height="1" fill="#000"/><rect x="193" y="359" width="1" height="1" fill="#000"/><rect x="82" y="360" width="1" height="1" fill="#000"/><rect x="193" y="361" width="1" height="1" fill="#000"/><rect x="82" y="362" width="1" height="1" fill="#000"/><rect x="193" y="363" width="1" height="1" fill="#000"/><rect x="82" y="364" width="1" height="1" fill="#000"/><rect x="193" y="365" width="1" height="1" fill="#000"/><rect x="82" y="366" width="1" height="1" fill="#000"/><rect x="193" y="367" width="1" height="1" fill="#000"/><rect x="82" y="368" width="1" height="1" fill="#000"/><rect x="193" y="369" width="1" height="1" fill="#000"/><rect x="82" y="370" width="1" height="1" fill="#000"/><rect x="193" y="371" width="1" height="1" fill="#000"/><rect x="82" y="372" width="1" height="1" fill="#000"/><rect x="193" y="373" width="1" height="1" fill="#000"/><rect x="82" y="374" width="1" height="1" fill="#000"/><rect x="193" y="375" width="1" height="1" fill="#000"/><rect x="53" y="386" width="1" height="1" fill="#8c8c8c"/><rect x="55" y="386" width="1" height="1" fill="#8c8c8c"/><rect x="57" y="386" width="1" height="1" fill="#8c8c8c"/><rect x="59" y="386" width="1" height="1" fill="#8c8c8c"/><rect x="61" y="386" width="1" height="1" fill="#8c8c8c"/><rect x="66" y="378" width="1" height="6" fill="#000"/><rect x="70" y="378" width="1" height="6" fill="#000"/><rect x="67" y="379" width="1" height="1" fill="#000"/><rect x="68" y="380" width="1" height="2" fill="#000"/><rect x="69" y="382" width="1" height="1" fill="#000"/><rect x="72" y="378" width="1" height="6" fill="#000"/><rect x="72" y="378" width="5" height="1" fill="#000"/><rect x="72" y="383" width="5" height="1" fill="#000"/><rect x="76" y="379" width="1" height="1" fill="#000"/><rect x="76" y="382" width="1" height="1" fill="#000"/><rect x="70" y="387" width="1" height="3" fill="#000"/><rect x="65" y="390" width="11" height="1" fill="#000"/><rect x="65" y="391" width="3" height="3" fill="#000"/><rect x="66" y="392" width="1" height="1" fill="#fff"/><rect x="73" y="391" width="3" height="3" fill="#000"/><rect x="74" y="392" width="1" height="1" fill="#fff"/><rect x="63" y="392" width="2" height="1" fill="#000"/><rect x="76" y="392" width="2" height="1" fill="#000"/><rect x="53" y="406" width="1" height="1" fill="#8c8c8c"/><rect x="55" y="406" width="1" height="1" fill="#8c8c8c"/><rect x="57" y="406" width="1" height="1" fill="#8c8c8c"/><rect x="59" y="406" width="1" height="1" fill="#8c8c8c"/><rect x="61" y="406" width="1" height="1" fill="#8c8c8c"/><rect x="68" y="398" width="7" height="1" fill="#000"/><rect x="67" y="399" width="2" height="1" fill="#000"/><rect x="66" y="400" width="2" height="1" fill="#000"/><rect x="65" y="401" width="2" height="1" fill="#000"/><rect x="65" y="402" width="1" height="1" fill="#000"/><rect x="75" y="399" width="1" height="3" fill="#000"/><rect x="74" y="402" width="1" height="1" fill="#000"/><rect x="73" y="403" width="1" height="1" fill="#000"/><rect x="71" y="401" width="1" height="4" fill="#000"/><rect x="72" y="403" width="1" height="1" fill="#000"/><rect x="71" y="404" width="5" height="1" fill="#000"/><rect x="70" y="406" width="1" height="3" fill="#000"/><rect x="65" y="409" width="11" height="1" fill="#000"/><rect x="65" y="411" width="3" height="3" fill="#000"/><rect x="66" y="412" width="1" height="1" fill="#fff"/><rect x="73" y="411" width="3" height="3" fill="#000"/><rect x="74" y="412" width="1" height="1" fill="#fff"/><rect x="63" y="412" width="2" height="1" fill="#000"/><rect x="76" y="412" width="2" height="1" fill="#000"/><rect x="53" y="426" width="1" height="1" fill="#8c8c8c"/><rect x="55" y="426" width="1" height="1" fill="#8c8c8c"/><rect x="57" y="426" width="1" height="1" fill="#8c8c8c"/><rect x="59" y="426" width="1" height="1" fill="#8c8c8c"/><rect x="61" y="426" width="1" height="1" fill="#8c8c8c"/><rect x="68" y="418" width="7" height="1" fill="#000"/><rect x="67" y="419" width="2" height="1" fill="#000"/><rect x="66" y="420" width="2" height="1" fill="#000"/><rect x="65" y="421" width="2" height="1" fill="#000"/><rect x="65" y="422" width="1" height="1" fill="#000"/><rect x="75" y="419" width="1" height="3" fill="#000"/><rect x="74" y="422" width="1" height="1" fill="#000"/><rect x="73" y="423" width="1" height="1" fill="#000"/><rect x="71" y="421" width="1" height="4" fill="#000"/><rect x="72" y="423" width="1" height="1" fill="#000"/><rect x="71" y="424" width="5" height="1" fill="#000"/><rect x="70" y="426" width="1" height="3" fill="#000"/><rect x="65" y="429" width="11" height="1" fill="#000"/><rect x="65" y="431" width="3" height="3" fill="#000"/><rect x="66" y="432" width="1" height="1" fill="#fff"/><rect x="73" y="431" width="3" height="3" fill="#000"/><rect x="74" y="432" width="1" height="1" fill="#fff"/><rect x="63" y="432" width="2" height="1" fill="#000"/><rect x="76" y="432" width="2" height="1" fill="#000"/><rect x="53" y="446" width="1" height="1" fill="#8c8c8c"/><rect x="55" y="446" width="1" height="1" fill="#8c8c8c"/><rect x="57" y="446" width="1" height="1" fill="#8c8c8c"/><rect x="59" y="446" width="1" height="1" fill="#8c8c8c"/><rect x="61" y="446" width="1" height="1" fill="#8c8c8c"/><rect x="68" y="438" width="7" height="1" fill="#000"/><rect x="67" y="439" width="2" height="1" fill="#000"/><rect x="66" y="440" width="2" height="1" fill="#000"/><rect x="65" y="441" width="2" height="1" fill="#000"/><rect x="65" y="442" width="1" height="1" fill="#000"/><rect x="75" y="439" width="1" height="3" fill="#000"/><rect x="74" y="442" width="1" height="1" fill="#000"/><rect x="73" y="443" width="1" height="1" fill="#000"/><rect x="71" y="441" width="1" height="4" fill="#000"/><rect x="72" y="443" width="1" height="1" fill="#000"/><rect x="71" y="444" width="5" height="1" fill="#000"/><rect x="70" y="446" width="1" height="3" fill="#000"/><rect x="65" y="449" width="11" height="1" fill="#000"/><rect x="65" y="451" width="3" height="3" fill="#000"/><rect x="66" y="452" width="1" height="1" fill="#fff"/><rect x="73" y="451" width="3" height="3" fill="#000"/><rect x="74" y="452" width="1" height="1" fill="#fff"/><rect x="63" y="452" width="2" height="1" fill="#000"/><rect x="76" y="452" width="2" height="1" fill="#000"/><rect x="53" y="466" width="1" height="1" fill="#8c8c8c"/><rect x="55" y="466" width="1" height="1" fill="#8c8c8c"/><rect x="57" y="466" width="1" height="1" fill="#8c8c8c"/><rect x="59" y="466" width="1" height="1" fill="#8c8c8c"/><rect x="61" y="466" width="1" height="1" fill="#8c8c8c"/><rect x="68" y="458" width="7" height="1" fill="#000"/><rect x="67" y="459" width="2" height="1" fill="#000"/><rect x="66" y="460" width="2" height="1" fill="#000"/><rect x="65" y="461" width="2" height="1" fill="#000"/><rect x="65" y="462" width="1" height="1" fill="#000"/><rect x="75" y="459" width="1" height="3" fill="#000"/><rect x="74" y="462" width="1" height="1" fill="#000"/><rect x="73" y="463" width="1" height="1" fill="#000"/><rect x="71" y="461" width="1" height="4" fill="#000"/><rect x="72" y="463" width="1" height="1" fill="#000"/><rect x="71" y="464" width="5" height="1" fill="#000"/><rect x="70" y="466" width="1" height="3" fill="#000"/><rect x="65" y="469" width="11" height="1" fill="#000"/><rect x="65" y="471" width="3" height="3" fill="#000"/><rect x="66" y="472" width="1" height="1" fill="#fff"/><rect x="73" y="471" width="3" height="3" fill="#000"/><rect x="74" y="472" width="1" height="1" fill="#fff"/><rect x="63" y="472" width="2" height="1" fill="#000"/><rect x="76" y="472" width="2" height="1" fill="#000"/><rect x="53" y="486" width="1" height="1" fill="#8c8c8c"/><rect x="55" y="486" width="1" height="1" fill="#8c8c8c"/><rect x="57" y="486" width="1" height="1" fill="#8c8c8c"/><rect x="59" y="486" width="1" height="1" fill="#8c8c8c"/><rect x="61" y="486" width="1" height="1" fill="#8c8c8c"/><rect x="66" y="478" width="1" height="6" fill="#000"/><rect x="70" y="478" width="1" height="6" fill="#000"/><rect x="67" y="479" width="1" height="1" fill="#000"/><rect x="68" y="480" width="1" height="2" fill="#000"/><rect x="69" y="482" width="1" height="1" fill="#000"/><rect x="72" y="478" width="1" height="6" fill="#000"/><rect x="72" y="478" width="5" height="1" fill="#000"/><rect x="72" y="483" width="5" height="1" fill="#000"/><rect x="76" y="479" width="1" height="1" fill="#000"/><rect x="76" y="482" width="1" height="1" fill="#000"/><rect x="65" y="485" width="12" height="4" fill="#000"/><rect x="66" y="486" width="10" height="2" fill="#f0f088"/><rect x="63" y="487" width="2" height="1" fill="#000"/><rect x="65" y="490" width="12" height="4" fill="#000"/><rect x="66" y="491" width="10" height="2" fill="#f0f088"/><rect x="63" y="492" width="2" height="1" fill="#000"/><rect x="78" y="487" width="1" height="6" fill="#000"/><rect x="77" y="487" width="1" height="1" fill="#000"/><rect x="77" y="492" width="1" height="1" fill="#000"/><rect x="29" y="502" width="9" height="9" fill="#858585"/><rect x="30" y="503" width="7" height="7" fill="#fff"/><rect x="31" y="506" width="5" height="1" fill="#000"/><rect x="39" y="506" width="1" height="1" fill="#8c8c8c"/><rect x="41" y="506" width="1" height="1" fill="#8c8c8c"/><rect x="43" y="506" width="1" height="1" fill="#8c8c8c"/><rect x="44" y="504" width="5" height="1" fill="#000"/><rect x="44" y="506" width="5" height="1" fill="#000"/><rect x="48" y="504" width="1" height="3" fill="#000"/><rect x="49" y="503" width="1" height="1" fill="#000"/><rect x="49" y="507" width="1" height="1" fill="#000"/><rect x="50" y="502" width="1" height="1" fill="#000"/><rect x="50" y="508" width="1" height="1" fill="#000"/><rect x="51" y="501" width="1" height="1" fill="#000"/><rect x="51" y="509" width="1" height="1" fill="#000"/><rect x="52" y="500" width="1" height="1" fill="#000"/><rect x="52" y="510" width="1" height="1" fill="#000"/><rect x="49" y="505" width="4" height="1" fill="#101060"/><rect x="53" y="499" width="7" height="4" fill="#000"/><rect x="54" y="500" width="5" height="1" fill="#e8e8b0"/><rect x="53" y="504" width="7" height="4" fill="#000"/><rect x="54" y="505" width="5" height="1" fill="#e8e8b0"/><rect x="53" y="509" width="7" height="4" fill="#000"/><rect x="54" y="510" width="5" height="1" fill="#e8e8b0"/><rect x="53" y="526" width="1" height="1" fill="#8c8c8c"/><rect x="55" y="526" width="1" height="1" fill="#8c8c8c"/><rect x="57" y="526" width="1" height="1" fill="#8c8c8c"/><rect x="59" y="526" width="1" height="1" fill="#8c8c8c"/><rect x="61" y="526" width="1" height="1" fill="#8c8c8c"/><rect x="66" y="518" width="1" height="6" fill="#000"/><rect x="70" y="518" width="1" height="6" fill="#000"/><rect x="67" y="519" width="1" height="1" fill="#000"/><rect x="68" y="520" width="1" height="2" fill="#000"/><rect x="69" y="522" width="1" height="1" fill="#000"/><rect x="72" y="518" width="1" height="6" fill="#000"/><rect x="72" y="518" width="5" height="1" fill="#000"/><rect x="72" y="523" width="5" height="1" fill="#000"/><rect x="76" y="519" width="1" height="1" fill="#000"/><rect x="76" y="522" width="1" height="1" fill="#000"/><rect x="65" y="525" width="12" height="4" fill="#000"/><rect x="66" y="526" width="10" height="2" fill="#f0f088"/><rect x="63" y="527" width="2" height="1" fill="#000"/><rect x="65" y="530" width="12" height="4" fill="#000"/><rect x="66" y="531" width="10" height="2" fill="#f0f088"/><rect x="63" y="532" width="2" height="1" fill="#000"/><rect x="78" y="527" width="1" height="6" fill="#000"/><rect x="77" y="527" width="1" height="1" fill="#000"/><rect x="77" y="532" width="1" height="1" fill="#000"/><rect x="53" y="546" width="1" height="1" fill="#8c8c8c"/><rect x="55" y="546" width="1" height="1" fill="#8c8c8c"/><rect x="57" y="546" width="1" height="1" fill="#8c8c8c"/><rect x="59" y="546" width="1" height="1" fill="#8c8c8c"/><rect x="61" y="546" width="1" height="1" fill="#8c8c8c"/><rect x="68" y="538" width="7" height="1" fill="#000"/><rect x="67" y="539" width="2" height="1" fill="#000"/><rect x="66" y="540" width="2" height="1" fill="#000"/><rect x="65" y="541" width="2" height="1" fill="#000"/><rect x="65" y="542" width="1" height="1" fill="#000"/><rect x="75" y="539" width="1" height="3" fill="#000"/><rect x="74" y="542" width="1" height="1" fill="#000"/><rect x="73" y="543" width="1" height="1" fill="#000"/><rect x="71" y="541" width="1" height="4" fill="#000"/><rect x="72" y="543" width="1" height="1" fill="#000"/><rect x="71" y="544" width="5" height="1" fill="#000"/><rect x="70" y="546" width="1" height="3" fill="#000"/><rect x="65" y="549" width="11" height="1" fill="#000"/><rect x="65" y="551" width="3" height="3" fill="#000"/><rect x="66" y="552" width="1" height="1" fill="#fff"/><rect x="73" y="551" width="3" height="3" fill="#000"/><rect x="74" y="552" width="1" height="1" fill="#fff"/><rect x="63" y="552" width="2" height="1" fill="#000"/><rect x="76" y="552" width="2" height="1" fill="#000"/><rect x="53" y="566" width="1" height="1" fill="#8c8c8c"/><rect x="55" y="566" width="1" height="1" fill="#8c8c8c"/><rect x="57" y="566" width="1" height="1" fill="#8c8c8c"/><rect x="59" y="566" width="1" height="1" fill="#8c8c8c"/><rect x="61" y="566" width="1" height="1" fill="#8c8c8c"/><rect x="68" y="558" width="7" height="1" fill="#000"/><rect x="67" y="559" width="2" height="1" fill="#000"/><rect x="66" y="560" width="2" height="1" fill="#000"/><rect x="65" y="561" width="2" height="1" fill="#000"/><rect x="65" y="562" width="1" height="1" fill="#000"/><rect x="75" y="559" width="1" height="3" fill="#000"/><rect x="74" y="562" width="1" height="1" fill="#000"/><rect x="73" y="563" width="1" height="1" fill="#000"/><rect x="71" y="561" width="1" height="4" fill="#000"/><rect x="72" y="563" width="1" height="1" fill="#000"/><rect x="71" y="564" width="5" height="1" fill="#000"/><rect x="70" y="566" width="1" height="3" fill="#000"/><rect x="65" y="569" width="11" height="1" fill="#000"/><rect x="65" y="571" width="3" height="3" fill="#000"/><rect x="66" y="572" width="1" height="1" fill="#fff"/><rect x="73" y="571" width="3" height="3" fill="#000"/><rect x="74" y="572" width="1" height="1" fill="#fff"/><rect x="63" y="572" width="2" height="1" fill="#000"/><rect x="76" y="572" width="2" height="1" fill="#000"/><rect x="53" y="586" width="1" height="1" fill="#8c8c8c"/><rect x="55" y="586" width="1" height="1" fill="#8c8c8c"/><rect x="57" y="586" width="1" height="1" fill="#8c8c8c"/><rect x="59" y="586" width="1" height="1" fill="#8c8c8c"/><rect x="61" y="586" width="1" height="1" fill="#8c8c8c"/><rect x="68" y="578" width="7" height="1" fill="#000"/><rect x="67" y="579" width="2" height="1" fill="#000"/><rect x="66" y="580" width="2" height="1" fill="#000"/><rect x="65" y="581" width="2" height="1" fill="#000"/><rect x="65" y="582" width="1" height="1" fill="#000"/><rect x="75" y="579" width="1" height="3" fill="#000"/><rect x="74" y="582" width="1" height="1" fill="#000"/><rect x="73" y="583" width="1" height="1" fill="#000"/><rect x="71" y="581" width="1" height="4" fill="#000"/><rect x="72" y="583" width="1" height="1" fill="#000"/><rect x="71" y="584" width="5" height="1" fill="#000"/><rect x="70" y="586" width="1" height="3" fill="#000"/><rect x="65" y="589" width="11" height="1" fill="#000"/><rect x="65" y="591" width="3" height="3" fill="#000"/><rect x="66" y="592" width="1" height="1" fill="#fff"/><rect x="73" y="591" width="3" height="3" fill="#000"/><rect x="74" y="592" width="1" height="1" fill="#fff"/><rect x="63" y="592" width="2" height="1" fill="#000"/><rect x="76" y="592" width="2" height="1" fill="#000"/><rect x="53" y="606" width="1" height="1" fill="#8c8c8c"/><rect x="55" y="606" width="1" height="1" fill="#8c8c8c"/><rect x="57" y="606" width="1" height="1" fill="#8c8c8c"/><rect x="59" y="606" width="1" height="1" fill="#8c8c8c"/><rect x="61" y="606" width="1" height="1" fill="#8c8c8c"/><rect x="66" y="598" width="1" height="6" fill="#000"/><rect x="70" y="598" width="1" height="6" fill="#000"/><rect x="67" y="599" width="1" height="1" fill="#000"/><rect x="68" y="600" width="1" height="2" fill="#000"/><rect x="69" y="602" width="1" height="1" fill="#000"/><rect x="72" y="598" width="1" height="6" fill="#000"/><rect x="72" y="598" width="5" height="1" fill="#000"/><rect x="72" y="603" width="5" height="1" fill="#000"/><rect x="76" y="599" width="1" height="1" fill="#000"/><rect x="76" y="602" width="1" height="1" fill="#000"/><rect x="70" y="607" width="1" height="3" fill="#000"/><rect x="65" y="610" width="11" height="1" fill="#000"/><rect x="65" y="611" width="3" height="3" fill="#000"/><rect x="66" y="612" width="1" height="1" fill="#fff"/><rect x="73" y="611" width="3" height="3" fill="#000"/><rect x="74" y="612" width="1" height="1" fill="#fff"/><rect x="63" y="612" width="2" height="1" fill="#000"/><rect x="76" y="612" width="2" height="1" fill="#000"/><rect x="29" y="622" width="9" height="9" fill="#858585"/><rect x="30" y="623" width="7" height="7" fill="#fff"/><rect x="31" y="626" width="5" height="1" fill="#000"/><rect x="39" y="626" width="1" height="1" fill="#8c8c8c"/><rect x="41" y="626" width="1" height="1" fill="#8c8c8c"/><rect x="43" y="626" width="1" height="1" fill="#8c8c8c"/><rect x="44" y="624" width="5" height="1" fill="#000"/><rect x="44" y="626" width="5" height="1" fill="#000"/><rect x="48" y="624" width="1" height="3" fill="#000"/><rect x="49" y="623" width="1" height="1" fill="#000"/><rect x="49" y="627" width="1" height="1" fill="#000"/><rect x="50" y="622" width="1" height="1" fill="#000"/><rect x="50" y="628" width="1" height="1" fill="#000"/><rect x="51" y="621" width="1" height="1" fill="#000"/><rect x="51" y="629" width="1" height="1" fill="#000"/><rect x="52" y="620" width="1" height="1" fill="#000"/><rect x="52" y="630" width="1" height="1" fill="#000"/><rect x="49" y="625" width="4" height="1" fill="#101060"/><rect x="53" y="619" width="7" height="4" fill="#000"/><rect x="54" y="620" width="5" height="1" fill="#e8e8b0"/><rect x="53" y="624" width="7" height="4" fill="#000"/><rect x="54" y="625" width="5" height="1" fill="#e8e8b0"/><rect x="53" y="629" width="7" height="4" fill="#000"/><rect x="54" y="630" width="5" height="1" fill="#e8e8b0"/><rect x="53" y="646" width="1" height="1" fill="#8c8c8c"/><rect x="55" y="646" width="1" height="1" fill="#8c8c8c"/><rect x="57" y="646" width="1" height="1" fill="#8c8c8c"/><rect x="59" y="646" width="1" height="1" fill="#8c8c8c"/><rect x="61" y="646" width="1" height="1" fill="#8c8c8c"/><rect x="68" y="638" width="7" height="1" fill="#000"/><rect x="67" y="639" width="2" height="1" fill="#000"/><rect x="66" y="640" width="2" height="1" fill="#000"/><rect x="65" y="641" width="2" height="1" fill="#000"/><rect x="65" y="642" width="1" height="1" fill="#000"/><rect x="75" y="639" width="1" height="3" fill="#000"/><rect x="74" y="642" width="1" height="1" fill="#000"/><rect x="73" y="643" width="1" height="1" fill="#000"/><rect x="71" y="641" width="1" height="4" fill="#000"/><rect x="72" y="643" width="1" height="1" fill="#000"/><rect x="71" y="644" width="5" height="1" fill="#000"/><rect x="70" y="646" width="1" height="3" fill="#000"/><rect x="65" y="649" width="11" height="1" fill="#000"/><rect x="65" y="651" width="3" height="3" fill="#000"/><rect x="66" y="652" width="1" height="1" fill="#fff"/><rect x="73" y="651" width="3" height="3" fill="#000"/><rect x="74" y="652" width="1" height="1" fill="#fff"/><rect x="63" y="652" width="2" height="1" fill="#000"/><rect x="76" y="652" width="2" height="1" fill="#000"/><rect x="53" y="666" width="1" height="1" fill="#8c8c8c"/><rect x="55" y="666" width="1" height="1" fill="#8c8c8c"/><rect x="57" y="666" width="1" height="1" fill="#8c8c8c"/><rect x="59" y="666" width="1" height="1" fill="#8c8c8c"/><rect x="61" y="666" width="1" height="1" fill="#8c8c8c"/><rect x="68" y="658" width="7" height="1" fill="#000"/><rect x="67" y="659" width="2" height="1" fill="#000"/><rect x="66" y="660" width="2" height="1" fill="#000"/><rect x="65" y="661" width="2" height="1" fill="#000"/><rect x="65" y="662" width="1" height="1" fill="#000"/><rect x="75" y="659" width="1" height="3" fill="#000"/><rect x="74" y="662" width="1" height="1" fill="#000"/><rect x="73" y="663" width="1" height="1" fill="#000"/><rect x="71" y="661" width="1" height="4" fill="#000"/><rect x="72" y="663" width="1" height="1" fill="#000"/><rect x="71" y="664" width="5" height="1" fill="#000"/><rect x="70" y="666" width="1" height="3" fill="#000"/><rect x="65" y="669" width="11" height="1" fill="#000"/><rect x="65" y="671" width="3" height="3" fill="#000"/><rect x="66" y="672" width="1" height="1" fill="#fff"/><rect x="73" y="671" width="3" height="3" fill="#000"/><rect x="74" y="672" width="1" height="1" fill="#fff"/><rect x="63" y="672" width="2" height="1" fill="#000"/><rect x="76" y="672" width="2" height="1" fill="#000"/><rect x="14" y="75" width="1" height="1" fill="#8c8c8c"/><rect x="14" y="77" width="1" height="1" fill="#8c8c8c"/><rect x="14" y="79" width="1" height="1" fill="#8c8c8c"/><rect x="14" y="81" width="1" height="1" fill="#8c8c8c"/><rect x="33" y="95" width="1" height="1" fill="#8c8c8c"/><rect x="33" y="97" width="1" height="1" fill="#8c8c8c"/><rect x="33" y="99" width="1" height="1" fill="#8c8c8c"/><rect x="33" y="101" width="1" height="1" fill="#8c8c8c"/><rect x="33" y="111" width="1" height="1" fill="#8c8c8c"/><rect x="33" y="113" width="1" height="1" fill="#8c8c8c"/><rect x="33" y="115" width="1" height="1" fill="#8c8c8c"/><rect x="33" y="117" width="1" height="1" fill="#8c8c8c"/><rect x="33" y="119" width="1" height="1" fill="#8c8c8c"/><rect x="33" y="121" width="1" height="1" fill="#8c8c8c"/><rect x="33" y="123" width="1" height="1" fill="#8c8c8c"/><rect x="33" y="125" width="1" height="1" fill="#8c8c8c"/><rect x="33" y="127" width="1" height="1" fill="#8c8c8c"/><rect x="33" y="129" width="1" height="1" fill="#8c8c8c"/><rect x="33" y="131" width="1" height="1" fill="#8c8c8c"/><rect x="33" y="133" width="1" height="1" fill="#8c8c8c"/><rect x="33" y="135" width="1" height="1" fill="#8c8c8c"/><rect x="33" y="137" width="1" height="1" fill="#8c8c8c"/><rect x="33" y="139" width="1" height="1" fill="#8c8c8c"/><rect x="33" y="141" width="1" height="1" fill="#8c8c8c"/><rect x="33" y="143" width="1" height="1" fill="#8c8c8c"/><rect x="33" y="145" width="1" height="1" fill="#8c8c8c"/><rect x="33" y="147" width="1" height="1" fill="#8c8c8c"/><rect x="33" y="149" width="1" height="1" fill="#8c8c8c"/><rect x="33" y="151" width="1" height="1" fill="#8c8c8c"/><rect x="33" y="153" width="1" height="1" fill="#8c8c8c"/><rect x="33" y="155" width="1" height="1" fill="#8c8c8c"/><rect x="33" y="157" width="1" height="1" fill="#8c8c8c"/><rect x="33" y="159" width="1" height="1" fill="#8c8c8c"/><rect x="33" y="161" width="1" height="1" fill="#8c8c8c"/><rect x="33" y="163" width="1" height="1" fill="#8c8c8c"/><rect x="33" y="165" width="1" height="1" fill="#8c8c8c"/><rect x="33" y="167" width="1" height="1" fill="#8c8c8c"/><rect x="33" y="169" width="1" height="1" fill="#8c8c8c"/><rect x="33" y="171" width="1" height="1" fill="#8c8c8c"/><rect x="33" y="173" width="1" height="1" fill="#8c8c8c"/><rect x="33" y="175" width="1" height="1" fill="#8c8c8c"/><rect x="33" y="177" width="1" height="1" fill="#8c8c8c"/><rect x="33" y="179" width="1" height="1" fill="#8c8c8c"/><rect x="33" y="181" width="1" height="1" fill="#8c8c8c"/><rect x="33" y="183" width="1" height="1" fill="#8c8c8c"/><rect x="33" y="185" width="1" height="1" fill="#8c8c8c"/><rect x="33" y="187" width="1" height="1" fill="#8c8c8c"/><rect x="33" y="189" width="1" height="1" fill="#8c8c8c"/><rect x="33" y="191" width="1" height="1" fill="#8c8c8c"/><rect x="33" y="193" width="1" height="1" fill="#8c8c8c"/><rect x="33" y="195" width="1" height="1" fill="#8c8c8c"/><rect x="33" y="197" width="1" height="1" fill="#8c8c8c"/><rect x="33" y="199" width="1" height="1" fill="#8c8c8c"/><rect x="33" y="201" width="1" height="1" fill="#8c8c8c"/><rect x="33" y="203" width="1" height="1" fill="#8c8c8c"/><rect x="33" y="205" width="1" height="1" fill="#8c8c8c"/><rect x="33" y="207" width="1" height="1" fill="#8c8c8c"/><rect x="33" y="209" width="1" height="1" fill="#8c8c8c"/><rect x="33" y="211" width="1" height="1" fill="#8c8c8c"/><rect x="33" y="213" width="1" height="1" fill="#8c8c8c"/><rect x="33" y="215" width="1" height="1" fill="#8c8c8c"/><rect x="33" y="217" width="1" height="1" fill="#8c8c8c"/><rect x="33" y="219" width="1" height="1" fill="#8c8c8c"/><rect x="33" y="221" width="1" height="1" fill="#8c8c8c"/><rect x="33" y="223" width="1" height="1" fill="#8c8c8c"/><rect x="33" y="225" width="1" height="1" fill="#8c8c8c"/><rect x="33" y="227" width="1" height="1" fill="#8c8c8c"/><rect x="33" y="229" width="1" height="1" fill="#8c8c8c"/><rect x="33" y="231" width="1" height="1" fill="#8c8c8c"/><rect x="33" y="233" width="1" height="1" fill="#8c8c8c"/><rect x="33" y="235" width="1" height="1" fill="#8c8c8c"/><rect x="33" y="237" width="1" height="1" fill="#8c8c8c"/><rect x="33" y="239" width="1" height="1" fill="#8c8c8c"/><rect x="33" y="241" width="1" height="1" fill="#8c8c8c"/><rect x="33" y="243" width="1" height="1" fill="#8c8c8c"/><rect x="33" y="245" width="1" height="1" fill="#8c8c8c"/><rect x="33" y="247" width="1" height="1" fill="#8c8c8c"/><rect x="33" y="249" width="1" height="1" fill="#8c8c8c"/><rect x="33" y="251" width="1" height="1" fill="#8c8c8c"/><rect x="33" y="253" width="1" height="1" fill="#8c8c8c"/><rect x="33" y="255" width="1" height="1" fill="#8c8c8c"/><rect x="33" y="257" width="1" height="1" fill="#8c8c8c"/><rect x="33" y="259" width="1" height="1" fill="#8c8c8c"/><rect x="33" y="261" width="1" height="1" fill="#8c8c8c"/><rect x="33" y="263" width="1" height="1" fill="#8c8c8c"/><rect x="33" y="265" width="1" height="1" fill="#8c8c8c"/><rect x="33" y="267" width="1" height="1" fill="#8c8c8c"/><rect x="33" y="269" width="1" height="1" fill="#8c8c8c"/><rect x="33" y="271" width="1" height="1" fill="#8c8c8c"/><rect x="33" y="273" width="1" height="1" fill="#8c8c8c"/><rect x="33" y="275" width="1" height="1" fill="#8c8c8c"/><rect x="33" y="277" width="1" height="1" fill="#8c8c8c"/><rect x="33" y="279" width="1" height="1" fill="#8c8c8c"/><rect x="33" y="281" width="1" height="1" fill="#8c8c8c"/><rect x="33" y="283" width="1" height="1" fill="#8c8c8c"/><rect x="33" y="285" width="1" height="1" fill="#8c8c8c"/><rect x="33" y="287" width="1" height="1" fill="#8c8c8c"/><rect x="33" y="289" width="1" height="1" fill="#8c8c8c"/><rect x="33" y="291" width="1" height="1" fill="#8c8c8c"/><rect x="33" y="293" width="1" height="1" fill="#8c8c8c"/><rect x="33" y="295" width="1" height="1" fill="#8c8c8c"/><rect x="33" y="297" width="1" height="1" fill="#8c8c8c"/><rect x="33" y="299" width="1" height="1" fill="#8c8c8c"/><rect x="33" y="301" width="1" height="1" fill="#8c8c8c"/><rect x="33" y="303" width="1" height="1" fill="#8c8c8c"/><rect x="33" y="305" width="1" height="1" fill="#8c8c8c"/><rect x="33" y="307" width="1" height="1" fill="#8c8c8c"/><rect x="33" y="309" width="1" height="1" fill="#8c8c8c"/><rect x="33" y="311" width="1" height="1" fill="#8c8c8c"/><rect x="33" y="313" width="1" height="1" fill="#8c8c8c"/><rect x="33" y="315" width="1" height="1" fill="#8c8c8c"/><rect x="33" y="317" width="1" height="1" fill="#8c8c8c"/><rect x="33" y="319" width="1" height="1" fill="#8c8c8c"/><rect x="33" y="321" width="1" height="1" fill="#8c8c8c"/><rect x="33" y="323" width="1" height="1" fill="#8c8c8c"/><rect x="33" y="325" width="1" height="1" fill="#8c8c8c"/><rect x="33" y="327" width="1" height="1" fill="#8c8c8c"/><rect x="33" y="329" width="1" height="1" fill="#8c8c8c"/><rect x="33" y="331" width="1" height="1" fill="#8c8c8c"/><rect x="33" y="333" width="1" height="1" fill="#8c8c8c"/><rect x="33" y="335" width="1" height="1" fill="#8c8c8c"/><rect x="33" y="337" width="1" height="1" fill="#8c8c8c"/><rect x="33" y="339" width="1" height="1" fill="#8c8c8c"/><rect x="33" y="341" width="1" height="1" fill="#8c8c8c"/><rect x="33" y="343" width="1" height="1" fill="#8c8c8c"/><rect x="33" y="345" width="1" height="1" fill="#8c8c8c"/><rect x="33" y="347" width="1" height="1" fill="#8c8c8c"/><rect x="33" y="349" width="1" height="1" fill="#8c8c8c"/><rect x="33" y="351" width="1" height="1" fill="#8c8c8c"/><rect x="33" y="353" width="1" height="1" fill="#8c8c8c"/><rect x="33" y="355" width="1" height="1" fill="#8c8c8c"/><rect x="33" y="357" width="1" height="1" fill="#8c8c8c"/><rect x="33" y="359" width="1" height="1" fill="#8c8c8c"/><rect x="33" y="361" width="1" height="1" fill="#8c8c8c"/><rect x="33" y="363" width="1" height="1" fill="#8c8c8c"/><rect x="33" y="365" width="1" height="1" fill="#8c8c8c"/><rect x="33" y="367" width="1" height="1" fill="#8c8c8c"/><rect x="33" y="369" width="1" height="1" fill="#8c8c8c"/><rect x="33" y="371" width="1" height="1" fill="#8c8c8c"/><rect x="33" y="373" width="1" height="1" fill="#8c8c8c"/><rect x="33" y="375" width="1" height="1" fill="#8c8c8c"/><rect x="33" y="377" width="1" height="1" fill="#8c8c8c"/><rect x="33" y="379" width="1" height="1" fill="#8c8c8c"/><rect x="33" y="381" width="1" height="1" fill="#8c8c8c"/><rect x="33" y="383" width="1" height="1" fill="#8c8c8c"/><rect x="33" y="385" width="1" height="1" fill="#8c8c8c"/><rect x="33" y="387" width="1" height="1" fill="#8c8c8c"/><rect x="33" y="389" width="1" height="1" fill="#8c8c8c"/><rect x="33" y="391" width="1" height="1" fill="#8c8c8c"/><rect x="33" y="393" width="1" height="1" fill="#8c8c8c"/><rect x="33" y="395" width="1" height="1" fill="#8c8c8c"/><rect x="33" y="397" width="1" height="1" fill="#8c8c8c"/><rect x="33" y="399" width="1" height="1" fill="#8c8c8c"/><rect x="33" y="401" width="1" height="1" fill="#8c8c8c"/><rect x="33" y="403" width="1" height="1" fill="#8c8c8c"/><rect x="33" y="405" width="1" height="1" fill="#8c8c8c"/><rect x="33" y="407" width="1" height="1" fill="#8c8c8c"/><rect x="33" y="409" width="1" height="1" fill="#8c8c8c"/><rect x="33" y="411" width="1" height="1" fill="#8c8c8c"/><rect x="33" y="413" width="1" height="1" fill="#8c8c8c"/><rect x="33" y="415" width="1" height="1" fill="#8c8c8c"/><rect x="33" y="417" width="1" height="1" fill="#8c8c8c"/><rect x="33" y="419" width="1" height="1" fill="#8c8c8c"/><rect x="33" y="421" width="1" height="1" fill="#8c8c8c"/><rect x="33" y="423" width="1" height="1" fill="#8c8c8c"/><rect x="33" y="425" width="1" height="1" fill="#8c8c8c"/><rect x="33" y="427" width="1" height="1" fill="#8c8c8c"/><rect x="33" y="429" width="1" height="1" fill="#8c8c8c"/><rect x="33" y="431" width="1" height="1" fill="#8c8c8c"/><rect x="33" y="433" width="1" height="1" fill="#8c8c8c"/><rect x="33" y="435" width="1" height="1" fill="#8c8c8c"/><rect x="33" y="437" width="1" height="1" fill="#8c8c8c"/><rect x="33" y="439" width="1" height="1" fill="#8c8c8c"/><rect x="33" y="441" width="1" height="1" fill="#8c8c8c"/><rect x="33" y="443" width="1" height="1" fill="#8c8c8c"/><rect x="33" y="445" width="1" height="1" fill="#8c8c8c"/><rect x="33" y="447" width="1" height="1" fill="#8c8c8c"/><rect x="33" y="449" width="1" height="1" fill="#8c8c8c"/><rect x="33" y="451" width="1" height="1" fill="#8c8c8c"/><rect x="33" y="453" width="1" height="1" fill="#8c8c8c"/><rect x="33" y="455" width="1" height="1" fill="#8c8c8c"/><rect x="33" y="457" width="1" height="1" fill="#8c8c8c"/><rect x="33" y="459" width="1" height="1" fill="#8c8c8c"/><rect x="33" y="461" width="1" height="1" fill="#8c8c8c"/><rect x="33" y="463" width="1" height="1" fill="#8c8c8c"/><rect x="33" y="465" width="1" height="1" fill="#8c8c8c"/><rect x="33" y="467" width="1" height="1" fill="#8c8c8c"/><rect x="33" y="469" width="1" height="1" fill="#8c8c8c"/><rect x="33" y="471" width="1" height="1" fill="#8c8c8c"/><rect x="33" y="473" width="1" height="1" fill="#8c8c8c"/><rect x="33" y="475" width="1" height="1" fill="#8c8c8c"/><rect x="33" y="477" width="1" height="1" fill="#8c8c8c"/><rect x="33" y="479" width="1" height="1" fill="#8c8c8c"/><rect x="33" y="481" width="1" height="1" fill="#8c8c8c"/><rect x="33" y="483" width="1" height="1" fill="#8c8c8c"/><rect x="33" y="485" width="1" height="1" fill="#8c8c8c"/><rect x="33" y="487" width="1" height="1" fill="#8c8c8c"/><rect x="33" y="489" width="1" height="1" fill="#8c8c8c"/><rect x="33" y="491" width="1" height="1" fill="#8c8c8c"/><rect x="33" y="493" width="1" height="1" fill="#8c8c8c"/><rect x="33" y="495" width="1" height="1" fill="#8c8c8c"/><rect x="33" y="497" width="1" height="1" fill="#8c8c8c"/><rect x="33" y="499" width="1" height="1" fill="#8c8c8c"/><rect x="33" y="501" width="1" height="1" fill="#8c8c8c"/><rect x="33" y="511" width="1" height="1" fill="#8c8c8c"/><rect x="33" y="513" width="1" height="1" fill="#8c8c8c"/><rect x="33" y="515" width="1" height="1" fill="#8c8c8c"/><rect x="33" y="517" width="1" height="1" fill="#8c8c8c"/><rect x="33" y="519" width="1" height="1" fill="#8c8c8c"/><rect x="33" y="521" width="1" height="1" fill="#8c8c8c"/><rect x="33" y="523" width="1" height="1" fill="#8c8c8c"/><rect x="33" y="525" width="1" height="1" fill="#8c8c8c"/><rect x="33" y="527" width="1" height="1" fill="#8c8c8c"/><rect x="33" y="529" width="1" height="1" fill="#8c8c8c"/><rect x="33" y="531" width="1" height="1" fill="#8c8c8c"/><rect x="33" y="533" width="1" height="1" fill="#8c8c8c"/><rect x="33" y="535" width="1" height="1" fill="#8c8c8c"/><rect x="33" y="537" width="1" height="1" fill="#8c8c8c"/><rect x="33" y="539" width="1" height="1" fill="#8c8c8c"/><rect x="33" y="541" width="1" height="1" fill="#8c8c8c"/><rect x="33" y="543" width="1" height="1" fill="#8c8c8c"/><rect x="33" y="545" width="1" height="1" fill="#8c8c8c"/><rect x="33" y="547" width="1" height="1" fill="#8c8c8c"/><rect x="33" y="549" width="1" height="1" fill="#8c8c8c"/><rect x="33" y="551" width="1" height="1" fill="#8c8c8c"/><rect x="33" y="553" width="1" height="1" fill="#8c8c8c"/><rect x="33" y="555" width="1" height="1" fill="#8c8c8c"/><rect x="33" y="557" width="1" height="1" fill="#8c8c8c"/><rect x="33" y="559" width="1" height="1" fill="#8c8c8c"/><rect x="33" y="561" width="1" height="1" fill="#8c8c8c"/><rect x="33" y="563" width="1" height="1" fill="#8c8c8c"/><rect x="33" y="565" width="1" height="1" fill="#8c8c8c"/><rect x="33" y="567" width="1" height="1" fill="#8c8c8c"/><rect x="33" y="569" width="1" height="1" fill="#8c8c8c"/><rect x="33" y="571" width="1" height="1" fill="#8c8c8c"/><rect x="33" y="573" width="1" height="1" fill="#8c8c8c"/><rect x="33" y="575" width="1" height="1" fill="#8c8c8c"/><rect x="33" y="577" width="1" height="1" fill="#8c8c8c"/><rect x="33" y="579" width="1" height="1" fill="#8c8c8c"/><rect x="33" y="581" width="1" height="1" fill="#8c8c8c"/><rect x="33" y="583" width="1" height="1" fill="#8c8c8c"/><rect x="33" y="585" width="1" height="1" fill="#8c8c8c"/><rect x="33" y="587" width="1" height="1" fill="#8c8c8c"/><rect x="33" y="589" width="1" height="1" fill="#8c8c8c"/><rect x="33" y="591" width="1" height="1" fill="#8c8c8c"/><rect x="33" y="593" width="1" height="1" fill="#8c8c8c"/><rect x="33" y="595" width="1" height="1" fill="#8c8c8c"/><rect x="33" y="597" width="1" height="1" fill="#8c8c8c"/><rect x="33" y="599" width="1" height="1" fill="#8c8c8c"/><rect x="33" y="601" width="1" height="1" fill="#8c8c8c"/><rect x="33" y="603" width="1" height="1" fill="#8c8c8c"/><rect x="33" y="605" width="1" height="1" fill="#8c8c8c"/><rect x="33" y="607" width="1" height="1" fill="#8c8c8c"/><rect x="33" y="609" width="1" height="1" fill="#8c8c8c"/><rect x="33" y="611" width="1" height="1" fill="#8c8c8c"/><rect x="33" y="613" width="1" height="1" fill="#8c8c8c"/><rect x="33" y="615" width="1" height="1" fill="#8c8c8c"/><rect x="33" y="617" width="1" height="1" fill="#8c8c8c"/><rect x="33" y="619" width="1" height="1" fill="#8c8c8c"/><rect x="33" y="621" width="1" height="1" fill="#8c8c8c"/><rect x="52" y="115" width="1" height="1" fill="#8c8c8c"/><rect x="52" y="117" width="1" height="1" fill="#8c8c8c"/><rect x="52" y="119" width="1" height="1" fill="#8c8c8c"/><rect x="52" y="121" width="1" height="1" fill="#8c8c8c"/><rect x="52" y="123" width="1" height="1" fill="#8c8c8c"/><rect x="52" y="125" width="1" height="1" fill="#8c8c8c"/><rect x="52" y="127" width="1" height="1" fill="#8c8c8c"/><rect x="52" y="129" width="1" height="1" fill="#8c8c8c"/><rect x="52" y="131" width="1" height="1" fill="#8c8c8c"/><rect x="52" y="133" width="1" height="1" fill="#8c8c8c"/><rect x="52" y="135" width="1" height="1" fill="#8c8c8c"/><rect x="52" y="137" width="1" height="1" fill="#8c8c8c"/><rect x="52" y="139" width="1" height="1" fill="#8c8c8c"/><rect x="52" y="141" width="1" height="1" fill="#8c8c8c"/><rect x="52" y="143" width="1" height="1" fill="#8c8c8c"/><rect x="52" y="145" width="1" height="1" fill="#8c8c8c"/><rect x="52" y="147" width="1" height="1" fill="#8c8c8c"/><rect x="52" y="149" width="1" height="1" fill="#8c8c8c"/><rect x="52" y="151" width="1" height="1" fill="#8c8c8c"/><rect x="52" y="153" width="1" height="1" fill="#8c8c8c"/><rect x="52" y="155" width="1" height="1" fill="#8c8c8c"/><rect x="52" y="157" width="1" height="1" fill="#8c8c8c"/><rect x="52" y="159" width="1" height="1" fill="#8c8c8c"/><rect x="52" y="161" width="1" height="1" fill="#8c8c8c"/><rect x="52" y="163" width="1" height="1" fill="#8c8c8c"/><rect x="52" y="165" width="1" height="1" fill="#8c8c8c"/><rect x="52" y="167" width="1" height="1" fill="#8c8c8c"/><rect x="52" y="169" width="1" height="1" fill="#8c8c8c"/><rect x="52" y="171" width="1" height="1" fill="#8c8c8c"/><rect x="52" y="173" width="1" height="1" fill="#8c8c8c"/><rect x="52" y="175" width="1" height="1" fill="#8c8c8c"/><rect x="52" y="177" width="1" height="1" fill="#8c8c8c"/><rect x="52" y="179" width="1" height="1" fill="#8c8c8c"/><rect x="52" y="181" width="1" height="1" fill="#8c8c8c"/><rect x="52" y="183" width="1" height="1" fill="#8c8c8c"/><rect x="52" y="185" width="1" height="1" fill="#8c8c8c"/><rect x="52" y="187" width="1" height="1" fill="#8c8c8c"/><rect x="52" y="189" width="1" height="1" fill="#8c8c8c"/><rect x="52" y="191" width="1" height="1" fill="#8c8c8c"/><rect x="52" y="193" width="1" height="1" fill="#8c8c8c"/><rect x="52" y="195" width="1" height="1" fill="#8c8c8c"/><rect x="52" y="197" width="1" height="1" fill="#8c8c8c"/><rect x="52" y="199" width="1" height="1" fill="#8c8c8c"/><rect x="52" y="201" width="1" height="1" fill="#8c8c8c"/><rect x="52" y="203" width="1" height="1" fill="#8c8c8c"/><rect x="52" y="205" width="1" height="1" fill="#8c8c8c"/><rect x="52" y="207" width="1" height="1" fill="#8c8c8c"/><rect x="52" y="209" width="1" height="1" fill="#8c8c8c"/><rect x="52" y="211" width="1" height="1" fill="#8c8c8c"/><rect x="52" y="213" width="1" height="1" fill="#8c8c8c"/><rect x="52" y="215" width="1" height="1" fill="#8c8c8c"/><rect x="52" y="217" width="1" height="1" fill="#8c8c8c"/><rect x="52" y="219" width="1" height="1" fill="#8c8c8c"/><rect x="52" y="221" width="1" height="1" fill="#8c8c8c"/><rect x="52" y="223" width="1" height="1" fill="#8c8c8c"/><rect x="52" y="225" width="1" height="1" fill="#8c8c8c"/><rect x="52" y="227" width="1" height="1" fill="#8c8c8c"/><rect x="52" y="229" width="1" height="1" fill="#8c8c8c"/><rect x="52" y="231" width="1" height="1" fill="#8c8c8c"/><rect x="52" y="233" width="1" height="1" fill="#8c8c8c"/><rect x="52" y="235" width="1" height="1" fill="#8c8c8c"/><rect x="52" y="237" width="1" height="1" fill="#8c8c8c"/><rect x="52" y="239" width="1" height="1" fill="#8c8c8c"/><rect x="52" y="241" width="1" height="1" fill="#8c8c8c"/><rect x="52" y="243" width="1" height="1" fill="#8c8c8c"/><rect x="52" y="245" width="1" height="1" fill="#8c8c8c"/><rect x="52" y="247" width="1" height="1" fill="#8c8c8c"/><rect x="52" y="249" width="1" height="1" fill="#8c8c8c"/><rect x="52" y="251" width="1" height="1" fill="#8c8c8c"/><rect x="52" y="253" width="1" height="1" fill="#8c8c8c"/><rect x="52" y="255" width="1" height="1" fill="#8c8c8c"/><rect x="52" y="257" width="1" height="1" fill="#8c8c8c"/><rect x="52" y="259" width="1" height="1" fill="#8c8c8c"/><rect x="52" y="261" width="1" height="1" fill="#8c8c8c"/><rect x="52" y="263" width="1" height="1" fill="#8c8c8c"/><rect x="52" y="265" width="1" height="1" fill="#8c8c8c"/><rect x="52" y="267" width="1" height="1" fill="#8c8c8c"/><rect x="52" y="269" width="1" height="1" fill="#8c8c8c"/><rect x="52" y="271" width="1" height="1" fill="#8c8c8c"/><rect x="52" y="273" width="1" height="1" fill="#8c8c8c"/><rect x="52" y="275" width="1" height="1" fill="#8c8c8c"/><rect x="52" y="277" width="1" height="1" fill="#8c8c8c"/><rect x="52" y="279" width="1" height="1" fill="#8c8c8c"/><rect x="52" y="281" width="1" height="1" fill="#8c8c8c"/><rect x="52" y="283" width="1" height="1" fill="#8c8c8c"/><rect x="52" y="285" width="1" height="1" fill="#8c8c8c"/><rect x="52" y="287" width="1" height="1" fill="#8c8c8c"/><rect x="52" y="289" width="1" height="1" fill="#8c8c8c"/><rect x="52" y="291" width="1" height="1" fill="#8c8c8c"/><rect x="52" y="293" width="1" height="1" fill="#8c8c8c"/><rect x="52" y="295" width="1" height="1" fill="#8c8c8c"/><rect x="52" y="297" width="1" height="1" fill="#8c8c8c"/><rect x="52" y="299" width="1" height="1" fill="#8c8c8c"/><rect x="52" y="301" width="1" height="1" fill="#8c8c8c"/><rect x="52" y="303" width="1" height="1" fill="#8c8c8c"/><rect x="52" y="305" width="1" height="1" fill="#8c8c8c"/><rect x="52" y="307" width="1" height="1" fill="#8c8c8c"/><rect x="52" y="309" width="1" height="1" fill="#8c8c8c"/><rect x="52" y="311" width="1" height="1" fill="#8c8c8c"/><rect x="52" y="313" width="1" height="1" fill="#8c8c8c"/><rect x="52" y="315" width="1" height="1" fill="#8c8c8c"/><rect x="52" y="317" width="1" height="1" fill="#8c8c8c"/><rect x="52" y="319" width="1" height="1" fill="#8c8c8c"/><rect x="52" y="321" width="1" height="1" fill="#8c8c8c"/><rect x="52" y="323" width="1" height="1" fill="#8c8c8c"/><rect x="52" y="325" width="1" height="1" fill="#8c8c8c"/><rect x="52" y="327" width="1" height="1" fill="#8c8c8c"/><rect x="52" y="329" width="1" height="1" fill="#8c8c8c"/><rect x="52" y="331" width="1" height="1" fill="#8c8c8c"/><rect x="52" y="333" width="1" height="1" fill="#8c8c8c"/><rect x="52" y="335" width="1" height="1" fill="#8c8c8c"/><rect x="52" y="337" width="1" height="1" fill="#8c8c8c"/><rect x="52" y="339" width="1" height="1" fill="#8c8c8c"/><rect x="52" y="341" width="1" height="1" fill="#8c8c8c"/><rect x="52" y="343" width="1" height="1" fill="#8c8c8c"/><rect x="52" y="345" width="1" height="1" fill="#8c8c8c"/><rect x="52" y="347" width="1" height="1" fill="#8c8c8c"/><rect x="52" y="349" width="1" height="1" fill="#8c8c8c"/><rect x="52" y="351" width="1" height="1" fill="#8c8c8c"/><rect x="52" y="353" width="1" height="1" fill="#8c8c8c"/><rect x="52" y="355" width="1" height="1" fill="#8c8c8c"/><rect x="52" y="357" width="1" height="1" fill="#8c8c8c"/><rect x="52" y="359" width="1" height="1" fill="#8c8c8c"/><rect x="52" y="361" width="1" height="1" fill="#8c8c8c"/><rect x="52" y="363" width="1" height="1" fill="#8c8c8c"/><rect x="52" y="365" width="1" height="1" fill="#8c8c8c"/><rect x="52" y="367" width="1" height="1" fill="#8c8c8c"/><rect x="52" y="369" width="1" height="1" fill="#8c8c8c"/><rect x="52" y="371" width="1" height="1" fill="#8c8c8c"/><rect x="52" y="373" width="1" height="1" fill="#8c8c8c"/><rect x="52" y="375" width="1" height="1" fill="#8c8c8c"/><rect x="52" y="377" width="1" height="1" fill="#8c8c8c"/><rect x="52" y="379" width="1" height="1" fill="#8c8c8c"/><rect x="52" y="381" width="1" height="1" fill="#8c8c8c"/><rect x="52" y="383" width="1" height="1" fill="#8c8c8c"/><rect x="52" y="385" width="1" height="1" fill="#8c8c8c"/><rect x="52" y="387" width="1" height="1" fill="#8c8c8c"/><rect x="52" y="389" width="1" height="1" fill="#8c8c8c"/><rect x="52" y="391" width="1" height="1" fill="#8c8c8c"/><rect x="52" y="393" width="1" height="1" fill="#8c8c8c"/><rect x="52" y="395" width="1" height="1" fill="#8c8c8c"/><rect x="52" y="397" width="1" height="1" fill="#8c8c8c"/><rect x="52" y="399" width="1" height="1" fill="#8c8c8c"/><rect x="52" y="401" width="1" height="1" fill="#8c8c8c"/><rect x="52" y="403" width="1" height="1" fill="#8c8c8c"/><rect x="52" y="405" width="1" height="1" fill="#8c8c8c"/><rect x="52" y="407" width="1" height="1" fill="#8c8c8c"/><rect x="52" y="409" width="1" height="1" fill="#8c8c8c"/><rect x="52" y="411" width="1" height="1" fill="#8c8c8c"/><rect x="52" y="413" width="1" height="1" fill="#8c8c8c"/><rect x="52" y="415" width="1" height="1" fill="#8c8c8c"/><rect x="52" y="417" width="1" height="1" fill="#8c8c8c"/><rect x="52" y="419" width="1" height="1" fill="#8c8c8c"/><rect x="52" y="421" width="1" height="1" fill="#8c8c8c"/><rect x="52" y="423" width="1" height="1" fill="#8c8c8c"/><rect x="52" y="425" width="1" height="1" fill="#8c8c8c"/><rect x="52" y="427" width="1" height="1" fill="#8c8c8c"/><rect x="52" y="429" width="1" height="1" fill="#8c8c8c"/><rect x="52" y="431" width="1" height="1" fill="#8c8c8c"/><rect x="52" y="433" width="1" height="1" fill="#8c8c8c"/><rect x="52" y="435" width="1" height="1" fill="#8c8c8c"/><rect x="52" y="437" width="1" height="1" fill="#8c8c8c"/><rect x="52" y="439" width="1" height="1" fill="#8c8c8c"/><rect x="52" y="441" width="1" height="1" fill="#8c8c8c"/><rect x="52" y="443" width="1" height="1" fill="#8c8c8c"/><rect x="52" y="445" width="1" height="1" fill="#8c8c8c"/><rect x="52" y="447" width="1" height="1" fill="#8c8c8c"/><rect x="52" y="449" width="1" height="1" fill="#8c8c8c"/><rect x="52" y="451" width="1" height="1" fill="#8c8c8c"/><rect x="52" y="453" width="1" height="1" fill="#8c8c8c"/><rect x="52" y="455" width="1" height="1" fill="#8c8c8c"/><rect x="52" y="457" width="1" height="1" fill="#8c8c8c"/><rect x="52" y="459" width="1" height="1" fill="#8c8c8c"/><rect x="52" y="461" width="1" height="1" fill="#8c8c8c"/><rect x="52" y="463" width="1" height="1" fill="#8c8c8c"/><rect x="52" y="465" width="1" height="1" fill="#8c8c8c"/><rect x="52" y="467" width="1" height="1" fill="#8c8c8c"/><rect x="52" y="469" width="1" height="1" fill="#8c8c8c"/><rect x="52" y="471" width="1" height="1" fill="#8c8c8c"/><rect x="52" y="473" width="1" height="1" fill="#8c8c8c"/><rect x="52" y="475" width="1" height="1" fill="#8c8c8c"/><rect x="52" y="477" width="1" height="1" fill="#8c8c8c"/><rect x="52" y="479" width="1" height="1" fill="#8c8c8c"/><rect x="52" y="481" width="1" height="1" fill="#8c8c8c"/><rect x="52" y="483" width="1" height="1" fill="#8c8c8c"/><rect x="52" y="485" width="1" height="1" fill="#8c8c8c"/><rect x="52" y="515" width="1" height="1" fill="#8c8c8c"/><rect x="52" y="517" width="1" height="1" fill="#8c8c8c"/><rect x="52" y="519" width="1" height="1" fill="#8c8c8c"/><rect x="52" y="521" width="1" height="1" fill="#8c8c8c"/><rect x="52" y="523" width="1" height="1" fill="#8c8c8c"/><rect x="52" y="525" width="1" height="1" fill="#8c8c8c"/><rect x="52" y="527" width="1" height="1" fill="#8c8c8c"/><rect x="52" y="529" width="1" height="1" fill="#8c8c8c"/><rect x="52" y="531" width="1" height="1" fill="#8c8c8c"/><rect x="52" y="533" width="1" height="1" fill="#8c8c8c"/><rect x="52" y="535" width="1" height="1" fill="#8c8c8c"/><rect x="52" y="537" width="1" height="1" fill="#8c8c8c"/><rect x="52" y="539" width="1" height="1" fill="#8c8c8c"/><rect x="52" y="541" width="1" height="1" fill="#8c8c8c"/><rect x="52" y="543" width="1" height="1" fill="#8c8c8c"/><rect x="52" y="545" width="1" height="1" fill="#8c8c8c"/><rect x="52" y="547" width="1" height="1" fill="#8c8c8c"/><rect x="52" y="549" width="1" height="1" fill="#8c8c8c"/><rect x="52" y="551" width="1" height="1" fill="#8c8c8c"/><rect x="52" y="553" width="1" height="1" fill="#8c8c8c"/><rect x="52" y="555" width="1" height="1" fill="#8c8c8c"/><rect x="52" y="557" width="1" height="1" fill="#8c8c8c"/><rect x="52" y="559" width="1" height="1" fill="#8c8c8c"/><rect x="52" y="561" width="1" height="1" fill="#8c8c8c"/><rect x="52" y="563" width="1" height="1" fill="#8c8c8c"/><rect x="52" y="565" width="1" height="1" fill="#8c8c8c"/><rect x="52" y="567" width="1" height="1" fill="#8c8c8c"/><rect x="52" y="569" width="1" height="1" fill="#8c8c8c"/><rect x="52" y="571" width="1" height="1" fill="#8c8c8c"/><rect x="52" y="573" width="1" height="1" fill="#8c8c8c"/><rect x="52" y="575" width="1" height="1" fill="#8c8c8c"/><rect x="52" y="577" width="1" height="1" fill="#8c8c8c"/><rect x="52" y="579" width="1" height="1" fill="#8c8c8c"/><rect x="52" y="581" width="1" height="1" fill="#8c8c8c"/><rect x="52" y="583" width="1" height="1" fill="#8c8c8c"/><rect x="52" y="585" width="1" height="1" fill="#8c8c8c"/><rect x="52" y="587" width="1" height="1" fill="#8c8c8c"/><rect x="52" y="589" width="1" height="1" fill="#8c8c8c"/><rect x="52" y="591" width="1" height="1" fill="#8c8c8c"/><rect x="52" y="593" width="1" height="1" fill="#8c8c8c"/><rect x="52" y="595" width="1" height="1" fill="#8c8c8c"/><rect x="52" y="597" width="1" height="1" fill="#8c8c8c"/><rect x="52" y="599" width="1" height="1" fill="#8c8c8c"/><rect x="52" y="601" width="1" height="1" fill="#8c8c8c"/><rect x="52" y="603" width="1" height="1" fill="#8c8c8c"/><rect x="52" y="605" width="1" height="1" fill="#8c8c8c"/><rect x="52" y="635" width="1" height="1" fill="#8c8c8c"/><rect x="52" y="637" width="1" height="1" fill="#8c8c8c"/><rect x="52" y="639" width="1" height="1" fill="#8c8c8c"/><rect x="52" y="641" width="1" height="1" fill="#8c8c8c"/><rect x="52" y="643" width="1" height="1" fill="#8c8c8c"/><rect x="52" y="645" width="1" height="1" fill="#8c8c8c"/><rect x="52" y="647" width="1" height="1" fill="#8c8c8c"/><rect x="52" y="649" width="1" height="1" fill="#8c8c8c"/><rect x="52" y="651" width="1" height="1" fill="#8c8c8c"/><rect x="52" y="653" width="1" height="1" fill="#8c8c8c"/><rect x="52" y="655" width="1" height="1" fill="#8c8c8c"/><rect x="52" y="657" width="1" height="1" fill="#8c8c8c"/><rect x="52" y="659" width="1" height="1" fill="#8c8c8c"/><rect x="52" y="661" width="1" height="1" fill="#8c8c8c"/><rect x="52" y="663" width="1" height="1" fill="#8c8c8c"/><rect x="52" y="665" width="1" height="1" fill="#8c8c8c"/><rect x="681" y="99" width="13" height="13" fill="#fff"/><rect x="681" y="99" width="12" height="1" fill="#a0a0a0"/><rect x="681" y="99" width="1" height="12" fill="#a0a0a0"/><rect x="682" y="100" width="10" height="1" fill="#696969"/><rect x="682" y="100" width="1" height="10" fill="#696969"/><rect x="681" y="111" width="13" height="1" fill="#fff"/><rect x="693" y="99" width="1" height="13" fill="#fff"/><rect x="682" y="110" width="11" height="1" fill="#e3e3e3"/><rect x="692" y="100" width="1" height="11" fill="#e3e3e3"/><rect x="684" y="104" width="1" height="3" fill="#000"/><rect x="685" y="105" width="1" height="3" fill="#000"/><rect x="686" y="106" width="1" height="3" fill="#000"/><rect x="687" y="105" width="1" height="3" fill="#000"/><rect x="688" y="104" width="1" height="3" fill="#000"/><rect x="689" y="103" width="1" height="3" fill="#000"/><rect x="690" y="102" width="1" height="3" fill="#000"/><rect x="681" y="115" width="13" height="13" fill="#fff"/><rect x="681" y="115" width="12" height="1" fill="#a0a0a0"/><rect x="681" y="115" width="1" height="12" fill="#a0a0a0"/><rect x="682" y="116" width="10" height="1" fill="#696969"/><rect x="682" y="116" width="1" height="10" fill="#696969"/><rect x="681" y="127" width="13" height="1" fill="#fff"/><rect x="693" y="115" width="1" height="13" fill="#fff"/><rect x="682" y="126" width="11" height="1" fill="#e3e3e3"/><rect x="692" y="116" width="1" height="11" fill="#e3e3e3"/><rect x="681" y="131" width="13" height="13" fill="#fff"/><rect x="681" y="131" width="12" height="1" fill="#a0a0a0"/><rect x="681" y="131" width="1" height="12" fill="#a0a0a0"/><rect x="682" y="132" width="10" height="1" fill="#696969"/><rect x="682" y="132" width="1" height="10" fill="#696969"/><rect x="681" y="143" width="13" height="1" fill="#fff"/><rect x="693" y="131" width="1" height="13" fill="#fff"/><rect x="682" y="142" width="11" height="1" fill="#e3e3e3"/><rect x="692" y="132" width="1" height="11" fill="#e3e3e3"/><rect x="681" y="147" width="13" height="13" fill="#fff"/><rect x="681" y="147" width="12" height="1" fill="#a0a0a0"/><rect x="681" y="147" width="1" height="12" fill="#a0a0a0"/><rect x="682" y="148" width="10" height="1" fill="#696969"/><rect x="682" y="148" width="1" height="10" fill="#696969"/><rect x="681" y="159" width="13" height="1" fill="#fff"/><rect x="693" y="147" width="1" height="13" fill="#fff"/><rect x="682" y="158" width="11" height="1" fill="#e3e3e3"/><rect x="692" y="148" width="1" height="11" fill="#e3e3e3"/><rect x="681" y="163" width="13" height="13" fill="#fff"/><rect x="681" y="163" width="12" height="1" fill="#a0a0a0"/><rect x="681" y="163" width="1" height="12" fill="#a0a0a0"/><rect x="682" y="164" width="10" height="1" fill="#696969"/><rect x="682" y="164" width="1" height="10" fill="#696969"/><rect x="681" y="175" width="13" height="1" fill="#fff"/><rect x="693" y="163" width="1" height="13" fill="#fff"/><rect x="682" y="174" width="11" height="1" fill="#e3e3e3"/><rect x="692" y="164" width="1" height="11" fill="#e3e3e3"/><rect x="681" y="179" width="13" height="13" fill="#fff"/><rect x="681" y="179" width="12" height="1" fill="#a0a0a0"/><rect x="681" y="179" width="1" height="12" fill="#a0a0a0"/><rect x="682" y="180" width="10" height="1" fill="#696969"/><rect x="682" y="180" width="1" height="10" fill="#696969"/><rect x="681" y="191" width="13" height="1" fill="#fff"/><rect x="693" y="179" width="1" height="13" fill="#fff"/><rect x="682" y="190" width="11" height="1" fill="#e3e3e3"/><rect x="692" y="180" width="1" height="11" fill="#e3e3e3"/><rect x="684" y="184" width="1" height="3" fill="#000"/><rect x="685" y="185" width="1" height="3" fill="#000"/><rect x="686" y="186" width="1" height="3" fill="#000"/><rect x="687" y="185" width="1" height="3" fill="#000"/><rect x="688" y="184" width="1" height="3" fill="#000"/><rect x="689" y="183" width="1" height="3" fill="#000"/><rect x="690" y="182" width="1" height="3" fill="#000"/><rect x="681" y="195" width="13" height="13" fill="#fff"/><rect x="681" y="195" width="12" height="1" fill="#a0a0a0"/><rect x="681" y="195" width="1" height="12" fill="#a0a0a0"/><rect x="682" y="196" width="10" height="1" fill="#696969"/><rect x="682" y="196" width="1" height="10" fill="#696969"/><rect x="681" y="207" width="13" height="1" fill="#fff"/><rect x="693" y="195" width="1" height="13" fill="#fff"/><rect x="682" y="206" width="11" height="1" fill="#e3e3e3"/><rect x="692" y="196" width="1" height="11" fill="#e3e3e3"/><rect x="684" y="200" width="1" height="3" fill="#000"/><rect x="685" y="201" width="1" height="3" fill="#000"/><rect x="686" y="202" width="1" height="3" fill="#000"/><rect x="687" y="201" width="1" height="3" fill="#000"/><rect x="688" y="200" width="1" height="3" fill="#000"/><rect x="689" y="199" width="1" height="3" fill="#000"/><rect x="690" y="198" width="1" height="3" fill="#000"/><rect x="681" y="211" width="13" height="13" fill="#fff"/><rect x="681" y="211" width="12" height="1" fill="#a0a0a0"/><rect x="681" y="211" width="1" height="12" fill="#a0a0a0"/><rect x="682" y="212" width="10" height="1" fill="#696969"/><rect x="682" y="212" width="1" height="10" fill="#696969"/><rect x="681" y="223" width="13" height="1" fill="#fff"/><rect x="693" y="211" width="1" height="13" fill="#fff"/><rect x="682" y="222" width="11" height="1" fill="#e3e3e3"/><rect x="692" y="212" width="1" height="11" fill="#e3e3e3"/><rect x="681" y="227" width="13" height="13" fill="#fff"/><rect x="681" y="227" width="12" height="1" fill="#a0a0a0"/><rect x="681" y="227" width="1" height="12" fill="#a0a0a0"/><rect x="682" y="228" width="10" height="1" fill="#696969"/><rect x="682" y="228" width="1" height="10" fill="#696969"/><rect x="681" y="239" width="13" height="1" fill="#fff"/><rect x="693" y="227" width="1" height="13" fill="#fff"/><rect x="682" y="238" width="11" height="1" fill="#e3e3e3"/><rect x="692" y="228" width="1" height="11" fill="#e3e3e3"/><rect x="681" y="243" width="13" height="13" fill="#fff"/><rect x="681" y="243" width="12" height="1" fill="#a0a0a0"/><rect x="681" y="243" width="1" height="12" fill="#a0a0a0"/><rect x="682" y="244" width="10" height="1" fill="#696969"/><rect x="682" y="244" width="1" height="10" fill="#696969"/><rect x="681" y="255" width="13" height="1" fill="#fff"/><rect x="693" y="243" width="1" height="13" fill="#fff"/><rect x="682" y="254" width="11" height="1" fill="#e3e3e3"/><rect x="692" y="244" width="1" height="11" fill="#e3e3e3"/><rect x="681" y="259" width="13" height="13" fill="#fff"/><rect x="681" y="259" width="12" height="1" fill="#a0a0a0"/><rect x="681" y="259" width="1" height="12" fill="#a0a0a0"/><rect x="682" y="260" width="10" height="1" fill="#696969"/><rect x="682" y="260" width="1" height="10" fill="#696969"/><rect x="681" y="271" width="13" height="1" fill="#fff"/><rect x="693" y="259" width="1" height="13" fill="#fff"/><rect x="682" y="270" width="11" height="1" fill="#e3e3e3"/><rect x="692" y="260" width="1" height="11" fill="#e3e3e3"/><rect x="681" y="275" width="13" height="13" fill="#fff"/><rect x="681" y="275" width="12" height="1" fill="#a0a0a0"/><rect x="681" y="275" width="1" height="12" fill="#a0a0a0"/><rect x="682" y="276" width="10" height="1" fill="#696969"/><rect x="682" y="276" width="1" height="10" fill="#696969"/><rect x="681" y="287" width="13" height="1" fill="#fff"/><rect x="693" y="275" width="1" height="13" fill="#fff"/><rect x="682" y="286" width="11" height="1" fill="#e3e3e3"/><rect x="692" y="276" width="1" height="11" fill="#e3e3e3"/><rect x="684" y="280" width="1" height="3" fill="#a0a0a0"/><rect x="685" y="281" width="1" height="3" fill="#a0a0a0"/><rect x="686" y="282" width="1" height="3" fill="#a0a0a0"/><rect x="687" y="281" width="1" height="3" fill="#a0a0a0"/><rect x="688" y="280" width="1" height="3" fill="#a0a0a0"/><rect x="689" y="279" width="1" height="3" fill="#a0a0a0"/><rect x="690" y="278" width="1" height="3" fill="#a0a0a0"/><rect x="681" y="291" width="13" height="13" fill="#fff"/><rect x="681" y="291" width="12" height="1" fill="#a0a0a0"/><rect x="681" y="291" width="1" height="12" fill="#a0a0a0"/><rect x="682" y="292" width="10" height="1" fill="#696969"/><rect x="682" y="292" width="1" height="10" fill="#696969"/><rect x="681" y="303" width="13" height="1" fill="#fff"/><rect x="693" y="291" width="1" height="13" fill="#fff"/><rect x="682" y="302" width="11" height="1" fill="#e3e3e3"/><rect x="692" y="292" width="1" height="11" fill="#e3e3e3"/><rect x="684" y="296" width="1" height="3" fill="#000"/><rect x="685" y="297" width="1" height="3" fill="#000"/><rect x="686" y="298" width="1" height="3" fill="#000"/><rect x="687" y="297" width="1" height="3" fill="#000"/><rect x="688" y="296" width="1" height="3" fill="#000"/><rect x="689" y="295" width="1" height="3" fill="#000"/><rect x="690" y="294" width="1" height="3" fill="#000"/><rect x="681" y="307" width="13" height="13" fill="#fff"/><rect x="681" y="307" width="12" height="1" fill="#a0a0a0"/><rect x="681" y="307" width="1" height="12" fill="#a0a0a0"/><rect x="682" y="308" width="10" height="1" fill="#696969"/><rect x="682" y="308" width="1" height="10" fill="#696969"/><rect x="681" y="319" width="13" height="1" fill="#fff"/><rect x="693" y="307" width="1" height="13" fill="#fff"/><rect x="682" y="318" width="11" height="1" fill="#e3e3e3"/><rect x="692" y="308" width="1" height="11" fill="#e3e3e3"/><rect x="681" y="323" width="13" height="13" fill="#fff"/><rect x="681" y="323" width="12" height="1" fill="#a0a0a0"/><rect x="681" y="323" width="1" height="12" fill="#a0a0a0"/><rect x="682" y="324" width="10" height="1" fill="#696969"/><rect x="682" y="324" width="1" height="10" fill="#696969"/><rect x="681" y="335" width="13" height="1" fill="#fff"/><rect x="693" y="323" width="1" height="13" fill="#fff"/><rect x="682" y="334" width="11" height="1" fill="#e3e3e3"/><rect x="692" y="324" width="1" height="11" fill="#e3e3e3"/><rect x="681" y="339" width="13" height="13" fill="#fff"/><rect x="681" y="339" width="12" height="1" fill="#a0a0a0"/><rect x="681" y="339" width="1" height="12" fill="#a0a0a0"/><rect x="682" y="340" width="10" height="1" fill="#696969"/><rect x="682" y="340" width="1" height="10" fill="#696969"/><rect x="681" y="351" width="13" height="1" fill="#fff"/><rect x="693" y="339" width="1" height="13" fill="#fff"/><rect x="682" y="350" width="11" height="1" fill="#e3e3e3"/><rect x="692" y="340" width="1" height="11" fill="#e3e3e3"/><rect x="681" y="355" width="13" height="13" fill="#fff"/><rect x="681" y="355" width="12" height="1" fill="#a0a0a0"/><rect x="681" y="355" width="1" height="12" fill="#a0a0a0"/><rect x="682" y="356" width="10" height="1" fill="#696969"/><rect x="682" y="356" width="1" height="10" fill="#696969"/><rect x="681" y="367" width="13" height="1" fill="#fff"/><rect x="693" y="355" width="1" height="13" fill="#fff"/><rect x="682" y="366" width="11" height="1" fill="#e3e3e3"/><rect x="692" y="356" width="1" height="11" fill="#e3e3e3"/><rect x="684" y="360" width="1" height="3" fill="#000"/><rect x="685" y="361" width="1" height="3" fill="#000"/><rect x="686" y="362" width="1" height="3" fill="#000"/><rect x="687" y="361" width="1" height="3" fill="#000"/><rect x="688" y="360" width="1" height="3" fill="#000"/><rect x="689" y="359" width="1" height="3" fill="#000"/><rect x="690" y="358" width="1" height="3" fill="#000"/><rect x="681" y="371" width="13" height="13" fill="#fff"/><rect x="681" y="371" width="12" height="1" fill="#a0a0a0"/><rect x="681" y="371" width="1" height="12" fill="#a0a0a0"/><rect x="682" y="372" width="10" height="1" fill="#696969"/><rect x="682" y="372" width="1" height="10" fill="#696969"/><rect x="681" y="383" width="13" height="1" fill="#fff"/><rect x="693" y="371" width="1" height="13" fill="#fff"/><rect x="682" y="382" width="11" height="1" fill="#e3e3e3"/><rect x="692" y="372" width="1" height="11" fill="#e3e3e3"/><rect x="681" y="387" width="13" height="13" fill="#fff"/><rect x="681" y="387" width="12" height="1" fill="#a0a0a0"/><rect x="681" y="387" width="1" height="12" fill="#a0a0a0"/><rect x="682" y="388" width="10" height="1" fill="#696969"/><rect x="682" y="388" width="1" height="10" fill="#696969"/><rect x="681" y="399" width="13" height="1" fill="#fff"/><rect x="693" y="387" width="1" height="13" fill="#fff"/><rect x="682" y="398" width="11" height="1" fill="#e3e3e3"/><rect x="692" y="388" width="1" height="11" fill="#e3e3e3"/></svg>
<svg class="abs" style="left:8px;top:6px" width="16" height="16">
  <rect x="0" y="0" width="16" height="16" fill="#e6cf3a"/>
  <rect x="0.5" y="0.5" width="15" height="15" fill="none" stroke="#5e5612"/>
  <circle cx="8" cy="8.2" r="6.2" fill="#3e2c16"/>
  <path d="M2.2 7 A6.2 6.2 0 0 1 12.5 3.8 L8 8 Z" fill="#c9bcb4"/>
  <path d="M2.5 10.5 L8 8.5 L13.5 6" stroke="#c0b848" stroke-width="1.3" fill="none"/>
  <path d="M6 7.5 L8.5 6.5 L10 8.5 L8 9.5 Z" fill="#d8d040"/>
  <path d="M8 9 L8 14.5" stroke="#9c9c48" stroke-width="1.2"/>
</svg>
<div class="lb" style="left:29px;top:7px;font-size:12px;line-height:16px">Struktur</div>


<div class="tr" style="top:59px;left:27px">SYSTEM: Integra 64 Plus 0002</div><div class="tr" style="top:79px;left:46px">1: Partition 1</div><div class="tr" style="top:99px;left:65px">1: Haus</div><div class="tr" style="top:119px;left:84px">1: Ankleide</div><div class="tr" style="top:139px;left:84px">2: Flur OG</div><div class="tr" style="top:159px;left:84px">4: Kind 1 Dachfenst</div><div class="tr" style="top:179px;left:84px">5: Arb. 1 Nebentür</div><div class="tr" style="top:199px;left:84px">6: Arbeit 1 Fenster</div><div class="tr" style="top:219px;left:84px">7: Gäste Bad</div><div class="tr" style="top:239px;left:84px">8: Arbeit 2</div><div class="tr" style="top:259px;left:84px">9: Küche</div><div class="tr" style="top:279px;left:84px">10: Esszimmer F.1+2</div><div class="tr" style="top:299px;left:84px">11: WZ Schiebetür</div><div class="tr" style="top:319px;left:84px">12: Haustür</div><div class="tr" style="top:339px;left:84px">13: HWR Stahltür</div><div class="tr" style="top:359px;left:84px;color:#fff">14: BM Diele</div><div class="tr" style="top:379px;left:84px">16: Sabotage</div><div class="tr" style="top:399px;left:84px">26: Haustür offen</div><div class="tr" style="top:419px;left:84px">27: HWR Tür offen</div><div class="tr" style="top:439px;left:84px">28: BM Diele</div><div class="tr" style="top:459px;left:84px">31: Scharfzustand</div><div class="tr" style="top:479px;left:84px">49: Technik</div><div class="tr" style="top:499px;left:65px">2: Garage</div><div class="tr" style="top:519px;left:84px">15: BM Garage</div><div class="tr" style="top:539px;left:84px">25: Tor o. HWR offen</div><div class="tr" style="top:559px;left:84px">29: Tor autom.öffnen</div><div class="tr" style="top:579px;left:84px">30: Garage unscharf</div><div class="tr" style="top:599px;left:84px">50: Garagentor</div><div class="tr" style="top:619px;left:65px">3: Auxillary</div><div class="tr" style="top:639px;left:84px">24: Tor sschließt</div><div class="tr" style="top:659px;left:84px">33: Alarm löschen</div>
<div class="abs" style="left:663px;top:59px;font-weight:bold;font-size:14px;line-height:17px;letter-spacing:0.22px;color:#0c0ca8;white-space:pre">Linie14  , Hauptplatine.</div>

<div class="lb" style="left:434px;top:100px;transform:scaleX(0.863);">Linienname:</div><div class="lb" style="left:434px;top:137px;transform:scaleX(0.873);">Gehört zu Ber.:</div><div class="lb" style="left:434px;top:172px;transform:scaleX(0.900);">Reaktionstyp:</div><div class="lb" style="left:434px;top:209px;transform:scaleX(0.881);">Eingangszeit:</div><div class="lb" style="left:434px;top:246px;transform:scaleX(0.875);">Linientyp:</div><div class="lb" style="left:434px;top:283px;transform:scaleX(0.871);">Sensibilität:</div><div class="lb" style="left:434px;top:321px;transform:scaleX(0.881);">Max. Verletzungszeit:</div><div class="lb" style="left:434px;top:360px;transform:scaleX(0.886);">Max. Zeit ohne Verletzung:</div><div class="lb" style="left:431px;top:411px;transform:scaleX(0.856);">Kommentar:</div><div class="lb" style="left:528px;top:100px;transform:scaleX(0.892);">BM Diele</div><div class="lb" style="left:530px;top:134px;transform:scaleX(0.906);">1: Haus</div><div class="lb" style="left:514px;top:173px;transform:scaleX(0.872);">3: Interne mit Verzög.</div><div class="lb" style="left:589px;top:209px;transform:scaleX(1.011);">25</div><div class="lb" style="left:639px;top:209px;transform:scaleX(0.883);">sek.</div><div class="lb" style="left:552px;top:243px;transform:scaleX(0.935);">4: 2EOL/NC</div><div class="lb" style="left:525px;top:280px;transform:scaleX(0.973);">320</div><div class="lb" style="left:570px;top:281px;transform:scaleX(0.796);">ms.</div><div class="lb" style="left:582px;top:317px;">0</div><div class="lb" style="left:634px;top:319px;transform:scaleX(0.883);">sek.</div><div class="lb" style="left:582px;top:356px;">0</div><div class="lb" style="left:644px;top:350px;transform:scaleX(0.907);">Stund</div><div class="lb" style="left:644px;top:366px;transform:scaleX(0.812);">min.</div><div class="lb" style="left:685px;top:82px;transform:scaleX(0.913);background:#f0f0f0;padding:0 1px;margin-left:-1px">Optionen</div><div class="lb" style="left:59px;top:33px;transform:scaleX(0.886);">System</div><div class="lb" style="left:207px;top:35px;transform:scaleX(0.901);">Module</div><div class="lb" style="left:699px;top:98px;transform:scaleX(0.895);">Kein Alarm nach Str.V.</div><div class="lb" style="left:699px;top:114px;transform:scaleX(0.895);">Zwangspriorität</div><div class="lb" style="left:699px;top:130px;transform:scaleX(0.890);">Steuert Video bei Unscharf</div><div class="lb" style="left:699px;top:146px;transform:scaleX(0.897);">Steuert Video bei Scharf</div><div class="lb" style="left:699px;top:162px;transform:scaleX(0.889);">Benutzer sperrt nicht</div><div class="lb" style="left:699px;top:178px;transform:scaleX(0.890);">Bei Nichtverl. des Objekts sperren</div><div class="lb" style="left:699px;top:194px;transform:scaleX(0.890);">Automatische Sperrung nach 3 Al.</div><div class="lb" style="left:699px;top:210px;transform:scaleX(0.890);">Automatische Sperrung nach 1 Al.</div><div class="lb" style="left:699px;top:226px;transform:scaleX(0.889);">Autolösch. der Zähler</div><div class="lb" style="left:699px;top:242px;transform:scaleX(0.884);">Voralarm</div><div class="lb" style="left:699px;top:258px;transform:scaleX(0.891);">Verzög. in Scharfmodus 2<u>3</u></div><div class="lb" style="left:699px;top:274px;transform:scaleX(0.883);color:#a0a0a0">Aufsch. verzög. (Voralarm)</div><div class="lb" style="left:699px;top:290px;transform:scaleX(0.888);">Keine Meld. bei Eingangszeit</div><div class="lb" style="left:699px;top:306px;transform:scaleX(0.917);">Rückcode nach Alarmende</div><div class="lb" style="left:699px;top:322px;transform:scaleX(0.919);">Rückcode nach Unscharfschaltung</div><div class="lb" style="left:699px;top:338px;transform:scaleX(0.889);">Alarm nach Ausgangszeit</div><div class="lb" style="left:699px;top:354px;transform:scaleX(0.884);">Alarm nach Entsperrung</div><div class="lb" style="left:699px;top:370px;transform:scaleX(0.870);">Sabotagealarm immer laut</div><div class="lb" style="left:699px;top:386px;transform:scaleX(0.883);">GONG im Erw.-Modul</div>
</body></html>
